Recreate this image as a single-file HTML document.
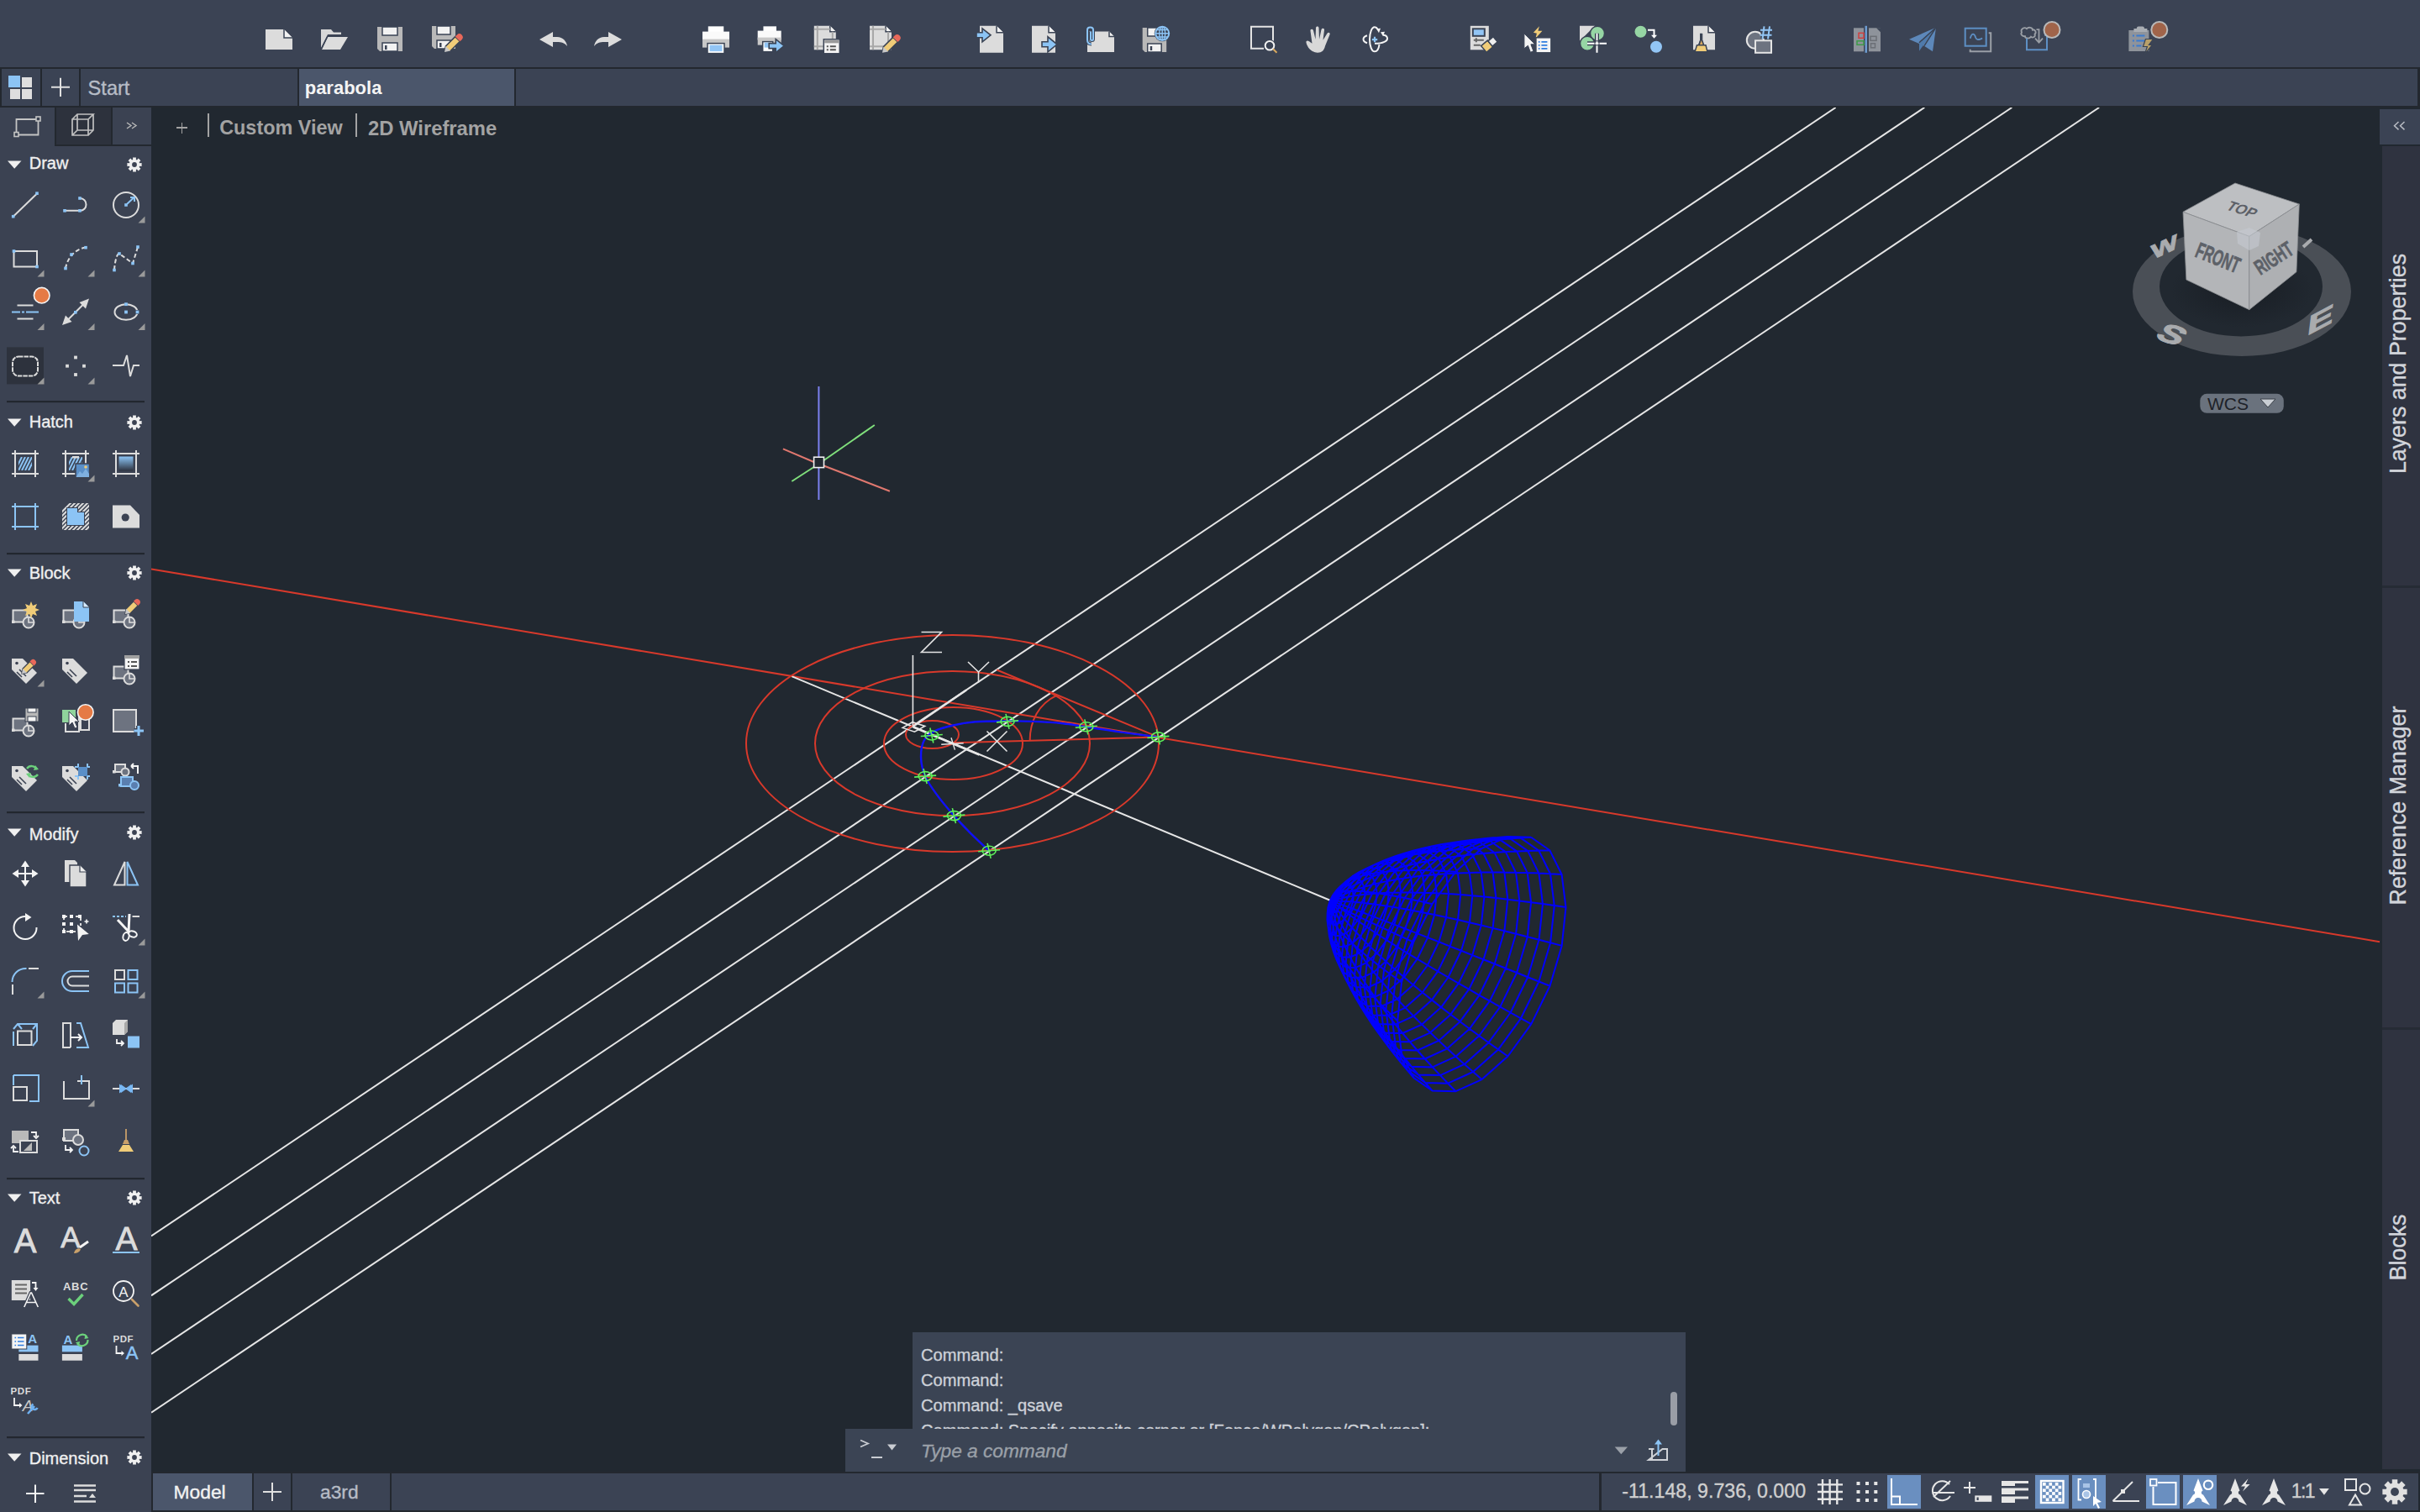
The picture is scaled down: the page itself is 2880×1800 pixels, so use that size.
<!DOCTYPE html>
<html><head><meta charset="utf-8"><style>
html,body{margin:0;padding:0;}
body{width:2880px;height:1800px;overflow:hidden;position:relative;background:#212830;font-family:"Liberation Sans", sans-serif;}
div{-webkit-text-stroke:0.35px currentColor;}
</style></head><body>
<svg style="position:absolute;left:0;top:0" width="2880" height="1800">
<defs><clipPath id="vp"><rect x="180" y="128" width="2655" height="1624"/></clipPath></defs>
<g clip-path="url(#vp)" fill="none" stroke-linecap="butt">
<line x1="180" y1="1471.5" x2="2184.6" y2="128" stroke="#e6e6e6" stroke-width="2"/>
<line x1="180" y1="1542.3" x2="2290.3" y2="128" stroke="#e6e6e6" stroke-width="2"/>
<line x1="180" y1="1612.0" x2="2394.3" y2="128" stroke="#e6e6e6" stroke-width="2"/>
<line x1="180" y1="1681.6" x2="2498.1" y2="128" stroke="#e6e6e6" stroke-width="2"/>
<line x1="180" y1="677.4" x2="2832" y2="1121.2" stroke="#d8392b" stroke-width="2"/>
<line x1="942.2" y1="805.2" x2="1584.6" y2="1072.5" stroke="#e6e6e6" stroke-width="2"/>
<ellipse cx="1133.5" cy="885" rx="245.5" ry="129" stroke="#d8392b" stroke-width="2"/>
<ellipse cx="1133.5" cy="885" rx="163.5" ry="86" stroke="#d8392b" stroke-width="2"/>
<ellipse cx="1134.5" cy="885" rx="82.5" ry="43.1" stroke="#d8392b" stroke-width="2"/>
<ellipse cx="1109.5" cy="874.5" rx="31.5" ry="16.5" stroke="#d8392b" stroke-width="2"/>
<path d="M1134,884.3 L1378.4,877.4 M1186.3,797.5 L1378.4,877.4 M1225.6,882 C1225.6,858 1236,838 1258,827.6" stroke="#d8392b" stroke-width="2"/>
<line x1="974.4" y1="460" x2="974.4" y2="544" stroke="#7b80ee" stroke-width="2"/>
<line x1="974.4" y1="557" x2="974.4" y2="595" stroke="#7b80ee" stroke-width="2"/>
<line x1="942.3" y1="573" x2="968.6" y2="556" stroke="#80e07c" stroke-width="2"/>
<line x1="980.5" y1="548" x2="1040.8" y2="506" stroke="#80e07c" stroke-width="2"/>
<line x1="931.9" y1="534.3" x2="968.6" y2="550" stroke="#e0786f" stroke-width="2"/>
<line x1="980.5" y1="554.5" x2="1058.9" y2="584.7" stroke="#e0786f" stroke-width="2"/>
<rect x="968.6" y="544.2" width="11.9" height="12.4" stroke="#f0f0f0" stroke-width="1.6"/>
<line x1="1086.4" y1="780" x2="1086.4" y2="864.5" stroke="#e6e6e6" stroke-width="1.6"/>
<line x1="1087" y1="864.5" x2="1150" y2="821.5" stroke="#e6e6e6" stroke-width="2.6"/>
<line x1="1087" y1="865.5" x2="1165.5" y2="898.5" stroke="#e6e6e6" stroke-width="2.6"/>
<path d="M1074.1,866.4 L1086,859.7 L1100.7,864.4 L1088.4,871.2 Z" stroke="#e6e6e6" stroke-width="1.6"/>
<path d="M1096.5,752.5 L1120.5,752.5 L1096.5,776.5 L1121,776.5" stroke="#e6e6e6" stroke-width="1.6"/>
<path d="M1152,788 L1164.5,800 L1177,788 M1164.5,800 L1164.5,812.6" stroke="#e6e6e6" stroke-width="1.6"/>
<path d="M1174.5,870.5 L1198.5,894.5 M1198.5,870.5 L1174.5,894.5" stroke="#e6e6e6" stroke-width="1.6"/>
<path d="M1120.2,886.3 L1146.7,884.8 M1132,878.3 L1136.4,892.6" stroke="#e6e6e6" stroke-width="1.4"/>
<path d="M1177.1,1012.8 C1173.6,1009.5 1163.2,1000.0 1156.2,993.1 C1149.3,986.1 1142.3,979.0 1135.4,971.1 C1128.5,963.2 1120.3,953.5 1114.6,945.6 C1108.9,937.8 1104.2,931.3 1101.1,924.1 C1098.1,917.0 1096.3,909.8 1096.1,902.8 C1095.8,895.8 1096.8,887.4 1099.5,882.0 C1102.2,876.6 1106.5,873.5 1112.3,870.4 C1118.0,867.3 1126.1,865.3 1134.2,863.5 C1142.3,861.6 1150.1,860.2 1160.9,859.3 C1171.7,858.5 1187.5,858.5 1199.0,858.4 C1210.6,858.3 1219.3,858.4 1230.3,858.9 C1241.3,859.3 1254.6,860.1 1265.0,861.2 C1275.4,862.3 1281.2,863.6 1292.8,865.3 C1304.3,867.1 1320.2,869.6 1334.4,871.6 C1348.7,873.6 1371.1,876.4 1378.4,877.4" stroke="#c040e0" stroke-width="1" opacity="0.8"/>
<path d="M1177.1,1012.8 C1173.6,1009.5 1163.2,1000.0 1156.2,993.1 C1149.3,986.1 1142.3,979.0 1135.4,971.1 C1128.5,963.2 1120.3,953.5 1114.6,945.6 C1108.9,937.8 1104.2,931.3 1101.1,924.1 C1098.1,917.0 1096.3,909.8 1096.1,902.8 C1095.8,895.8 1096.8,887.4 1099.5,882.0 C1102.2,876.6 1106.5,873.5 1112.3,870.4 C1118.0,867.3 1126.1,865.3 1134.2,863.5 C1142.3,861.6 1150.1,860.2 1160.9,859.3 C1171.7,858.5 1187.5,858.5 1199.0,858.4 C1210.6,858.3 1219.3,858.4 1230.3,858.9 C1241.3,859.3 1254.6,860.1 1265.0,861.2 C1275.4,862.3 1281.2,863.6 1292.8,865.3 C1304.3,867.1 1320.2,869.6 1334.4,871.6 C1348.7,873.6 1371.1,876.4 1378.4,877.4" stroke="#1010ff" stroke-width="2.4"/>
<ellipse cx="1108.8" cy="875.5" rx="8" ry="5.5" stroke="#5ef05a" stroke-width="1.6"/>
<path d="M1095.8,876.5 L1121.8,874.5 M1106.8,866.5 L1110.8,884.5" stroke="#5ef05a" stroke-width="1.6"/>
<ellipse cx="1199.0" cy="858.9" rx="8" ry="5.5" stroke="#5ef05a" stroke-width="1.6"/>
<path d="M1186.0,859.9 L1212.0,857.9 M1197.0,849.9 L1201.0,867.9" stroke="#5ef05a" stroke-width="1.6"/>
<ellipse cx="1292.8" cy="865.3" rx="8" ry="5.5" stroke="#5ef05a" stroke-width="1.6"/>
<path d="M1279.8,866.3 L1305.8,864.3 M1290.8,856.3 L1294.8,874.3" stroke="#5ef05a" stroke-width="1.6"/>
<ellipse cx="1378.4" cy="877.4" rx="8" ry="5.5" stroke="#5ef05a" stroke-width="1.6"/>
<path d="M1365.4,878.4 L1391.4,876.4 M1376.4,868.4 L1380.4,886.4" stroke="#5ef05a" stroke-width="1.6"/>
<ellipse cx="1101.1" cy="924.1" rx="8" ry="5.5" stroke="#5ef05a" stroke-width="1.6"/>
<path d="M1088.1,925.1 L1114.1,923.1 M1099.1,915.1 L1103.1,933.1" stroke="#5ef05a" stroke-width="1.6"/>
<ellipse cx="1135.4" cy="971.1" rx="8" ry="5.5" stroke="#5ef05a" stroke-width="1.6"/>
<path d="M1122.4,972.1 L1148.4,970.1 M1133.4,962.1 L1137.4,980.1" stroke="#5ef05a" stroke-width="1.6"/>
<ellipse cx="1177.1" cy="1012.8" rx="8" ry="5.5" stroke="#5ef05a" stroke-width="1.6"/>
<path d="M1164.1,1013.8 L1190.1,1011.8 M1175.1,1003.8 L1179.1,1021.8" stroke="#5ef05a" stroke-width="1.6"/>
<path d="M1584.6,1072.5 L1594.0,1062.4 L1604.3,1053.6 L1615.2,1045.9 L1626.6,1039.3 L1638.3,1033.4 L1650.1,1028.3 L1662.2,1023.8 L1674.3,1019.8 L1686.5,1016.3 L1698.7,1013.2 L1711.0,1010.4 L1723.3,1008.0 L1735.7,1005.9 L1748.0,1004.0 L1760.4,1002.3 L1772.7,1000.8 L1785.1,999.6 L1797.4,998.5 L1809.8,997.6 L1822.1,996.8 M1584.6,1072.5 L1595.8,1063.6 L1607.7,1056.0 L1620.2,1049.4 L1633.0,1043.7 L1646.1,1038.8 L1659.2,1034.6 L1672.4,1031.0 L1685.7,1027.8 L1699.0,1025.0 L1712.3,1022.6 L1725.6,1020.6 L1738.9,1018.8 L1752.1,1017.3 L1765.4,1016.0 L1778.6,1015.0 L1791.8,1014.1 L1805.0,1013.4 L1818.1,1012.9 L1831.2,1012.5 L1844.3,1012.2 M1584.6,1072.5 L1596.9,1065.9 L1609.9,1060.4 L1623.4,1055.9 L1637.2,1052.1 L1651.1,1048.9 L1665.0,1046.4 L1679.0,1044.3 L1693.1,1042.6 L1707.0,1041.2 L1721.0,1040.2 L1734.9,1039.4 L1748.8,1038.9 L1762.7,1038.6 L1776.5,1038.5 L1790.3,1038.5 L1804.0,1038.8 L1817.7,1039.1 L1831.4,1039.6 L1845.0,1040.2 L1858.6,1041.0 M1584.6,1072.5 L1597.3,1069.1 L1610.7,1066.5 L1624.5,1064.7 L1638.6,1063.4 L1652.8,1062.7 L1667.1,1062.4 L1681.3,1062.4 L1695.6,1062.7 L1709.8,1063.3 L1724.0,1064.1 L1738.2,1065.1 L1752.3,1066.3 L1766.4,1067.6 L1780.4,1069.1 L1794.3,1070.7 L1808.3,1072.4 L1822.1,1074.2 L1836.0,1076.1 L1849.8,1078.1 L1863.5,1080.1 M1584.6,1072.5 L1596.9,1072.7 L1610.0,1073.6 L1623.4,1074.9 L1637.2,1076.7 L1651.1,1078.7 L1665.1,1081.1 L1679.1,1083.6 L1693.1,1086.3 L1707.1,1089.1 L1721.1,1092.1 L1735.0,1095.1 L1748.9,1098.3 L1762.8,1101.5 L1776.6,1104.9 L1790.4,1108.2 L1804.1,1111.7 L1817.8,1115.2 L1831.5,1118.7 L1845.1,1122.3 L1858.7,1125.9 M1584.6,1072.5 L1595.8,1076.6 L1607.8,1081.0 L1620.3,1085.7 L1633.1,1090.6 L1646.1,1095.6 L1659.3,1100.6 L1672.5,1105.8 L1685.8,1110.9 L1699.1,1116.1 L1712.4,1121.3 L1725.7,1126.6 L1739.0,1131.8 L1752.2,1137.1 L1765.5,1142.3 L1778.7,1147.5 L1791.9,1152.8 L1805.1,1158.0 L1818.2,1163.3 L1831.4,1168.5 L1844.5,1173.8 M1584.6,1072.5 L1594.0,1080.2 L1604.3,1088.0 L1615.3,1095.9 L1626.7,1103.7 L1638.3,1111.5 L1650.2,1119.2 L1662.3,1126.8 L1674.4,1134.3 L1686.6,1141.7 L1698.9,1149.0 L1711.2,1156.3 L1723.5,1163.5 L1735.8,1170.7 L1748.2,1177.7 L1760.5,1184.8 L1772.9,1191.7 L1785.3,1198.6 L1797.6,1205.5 L1810.0,1212.3 L1822.3,1219.1 M1584.6,1072.5 L1591.8,1083.3 L1600.0,1094.0 L1609.0,1104.5 L1618.6,1114.8 L1628.5,1124.9 L1638.8,1134.8 L1649.3,1144.5 L1660.0,1154.0 L1670.9,1163.3 L1681.8,1172.5 L1692.8,1181.5 L1704.0,1190.4 L1715.1,1199.1 L1726.4,1207.7 L1737.6,1216.2 L1748.9,1224.7 L1760.3,1233.0 L1771.6,1241.2 L1783.0,1249.4 L1794.4,1257.5 M1584.6,1072.5 L1589.3,1085.5 L1595.2,1098.2 L1602.1,1110.7 L1609.6,1122.8 L1617.7,1134.6 L1626.2,1146.1 L1635.0,1157.3 L1644.1,1168.2 L1653.4,1178.9 L1662.9,1189.3 L1672.5,1199.6 L1682.3,1209.7 L1692.2,1219.6 L1702.2,1229.3 L1712.2,1238.9 L1722.3,1248.3 L1732.5,1257.7 L1742.8,1266.9 L1753.1,1276.0 L1763.5,1285.1 M1584.6,1072.5 L1586.8,1086.6 L1590.4,1100.4 L1595.1,1113.9 L1600.6,1126.9 L1606.8,1139.6 L1613.5,1151.9 L1620.7,1163.8 L1628.1,1175.5 L1635.9,1186.9 L1644.0,1198.0 L1652.2,1208.9 L1660.6,1219.6 L1669.2,1230.0 L1678.0,1240.3 L1686.8,1250.5 L1695.8,1260.5 L1704.8,1270.4 L1714.0,1280.1 L1723.2,1289.7 L1732.5,1299.2 M1584.6,1072.5 L1584.6,1086.5 L1586.1,1100.3 L1588.8,1113.7 L1592.5,1126.7 L1597.0,1139.4 L1602.1,1151.6 L1607.7,1163.5 L1613.8,1175.1 L1620.2,1186.5 L1626.9,1197.6 L1633.9,1208.4 L1641.1,1219.1 L1648.5,1229.5 L1656.1,1239.8 L1663.9,1249.9 L1671.8,1259.9 L1679.8,1269.7 L1687.9,1279.4 L1696.2,1289.0 L1704.6,1298.5 M1584.6,1072.5 L1582.8,1085.3 L1582.7,1097.9 L1583.8,1110.2 L1586.1,1122.3 L1589.2,1133.9 L1593.0,1145.3 L1597.4,1156.4 L1602.3,1167.2 L1607.7,1177.8 L1613.3,1188.1 L1619.3,1198.3 L1625.6,1208.3 L1632.1,1218.1 L1638.8,1227.7 L1645.7,1237.2 L1652.7,1246.6 L1659.9,1255.9 L1667.3,1265.1 L1674.8,1274.1 L1682.4,1283.1 M1584.6,1072.5 L1581.7,1083.0 L1580.5,1093.5 L1580.6,1103.8 L1581.9,1113.9 L1584.2,1123.8 L1587.2,1133.6 L1590.8,1143.1 L1595.0,1152.4 L1599.6,1161.6 L1604.6,1170.6 L1610.0,1179.4 L1615.6,1188.2 L1621.5,1196.8 L1627.6,1205.3 L1633.9,1213.7 L1640.5,1222.0 L1647.2,1230.2 L1654.0,1238.3 L1661.0,1246.4 L1668.1,1254.3 M1584.6,1072.5 L1581.3,1079.9 L1579.7,1087.4 L1579.5,1095.0 L1580.5,1102.6 L1582.5,1110.1 L1585.2,1117.6 L1588.5,1124.9 L1592.5,1132.3 L1596.8,1139.5 L1601.6,1146.7 L1606.7,1153.8 L1612.1,1160.8 L1617.8,1167.8 L1623.7,1174.7 L1629.9,1181.5 L1636.2,1188.4 L1642.7,1195.1 L1649.4,1201.9 L1656.2,1208.5 L1663.2,1215.2 M1584.6,1072.5 L1581.7,1076.2 L1580.4,1080.3 L1580.6,1084.7 L1581.9,1089.3 L1584.2,1094.0 L1587.2,1098.9 L1590.8,1103.7 L1595.0,1108.7 L1599.6,1113.7 L1604.6,1118.7 L1609.9,1123.7 L1615.5,1128.8 L1621.4,1133.8 L1627.6,1138.9 L1633.9,1144.0 L1640.4,1149.1 L1647.1,1154.2 L1653.9,1159.2 L1660.9,1164.3 L1668.0,1169.4 M1584.6,1072.5 L1582.8,1072.4 L1582.6,1072.9 L1583.8,1074.0 L1586.0,1075.4 L1589.1,1077.2 L1593.0,1079.3 L1597.4,1081.6 L1602.3,1084.0 L1607.6,1086.7 L1613.2,1089.4 L1619.2,1092.3 L1625.5,1095.3 L1632.0,1098.3 L1638.7,1101.5 L1645.5,1104.7 L1652.6,1107.9 L1659.8,1111.3 L1667.2,1114.6 L1674.6,1118.1 L1682.2,1121.5 M1584.6,1072.5 L1584.6,1068.8 L1586.1,1065.9 L1588.8,1063.8 L1592.5,1062.3 L1596.9,1061.3 L1602.0,1060.8 L1607.6,1060.6 L1613.7,1060.7 L1620.1,1061.1 L1626.8,1061.7 L1633.7,1062.5 L1641.0,1063.6 L1648.4,1064.7 L1656.0,1066.0 L1663.7,1067.5 L1671.6,1069.0 L1679.6,1070.7 L1687.8,1072.4 L1696.0,1074.3 L1704.4,1076.2 M1584.6,1072.5 L1586.8,1065.7 L1590.4,1060.0 L1595.0,1055.2 L1600.6,1051.2 L1606.7,1047.8 L1613.4,1045.1 L1620.5,1042.8 L1628.0,1041.0 L1635.8,1039.5 L1643.8,1038.3 L1652.1,1037.4 L1660.5,1036.7 L1669.1,1036.3 L1677.8,1036.0 L1686.6,1036.0 L1695.6,1036.1 L1704.6,1036.3 L1713.8,1036.7 L1723.0,1037.2 L1732.3,1037.8 M1584.6,1072.5 L1589.3,1063.5 L1595.2,1055.7 L1602.0,1049.0 L1609.5,1043.2 L1617.6,1038.1 L1626.1,1033.8 L1634.9,1030.0 L1644.0,1026.8 L1653.3,1023.9 L1662.7,1021.4 L1672.4,1019.3 L1682.1,1017.4 L1692.0,1015.8 L1702.0,1014.5 L1712.0,1013.3 L1722.1,1012.4 L1732.3,1011.6 L1742.6,1011.0 L1752.9,1010.6 L1763.2,1010.2 M1584.6,1072.5 L1591.8,1062.4 L1600.0,1053.5 L1609.0,1045.8 L1618.5,1039.1 L1628.5,1033.2 L1638.7,1028.0 L1649.2,1023.5 L1659.9,1019.5 L1670.7,1015.9 L1681.7,1012.8 L1692.7,1010.0 L1703.8,1007.5 L1715.0,1005.3 L1726.2,1003.4 L1737.4,1001.7 L1748.7,1000.2 L1760.1,999.0 L1771.4,997.8 L1782.8,996.9 L1794.2,996.1 M1594.0,1062.4 L1595.8,1063.6 L1596.9,1065.9 L1597.3,1069.1 L1596.9,1072.7 L1595.8,1076.6 L1594.0,1080.2 L1591.8,1083.3 L1589.3,1085.5 L1586.8,1086.6 L1584.6,1086.5 L1582.8,1085.3 L1581.7,1083.0 L1581.3,1079.9 L1581.7,1076.2 L1582.8,1072.4 L1584.6,1068.8 L1586.8,1065.7 L1589.3,1063.5 L1591.8,1062.4 L1594.0,1062.4 M1604.3,1053.6 L1607.7,1056.0 L1609.9,1060.4 L1610.7,1066.5 L1610.0,1073.6 L1607.8,1081.0 L1604.3,1088.0 L1600.0,1094.0 L1595.2,1098.2 L1590.4,1100.4 L1586.1,1100.3 L1582.7,1097.9 L1580.5,1093.5 L1579.7,1087.4 L1580.4,1080.3 L1582.6,1072.9 L1586.1,1065.9 L1590.4,1060.0 L1595.2,1055.7 L1600.0,1053.5 L1604.3,1053.6 M1615.2,1045.9 L1620.2,1049.4 L1623.4,1055.9 L1624.5,1064.7 L1623.4,1074.9 L1620.3,1085.7 L1615.3,1095.9 L1609.0,1104.5 L1602.1,1110.7 L1595.1,1113.9 L1588.8,1113.7 L1583.8,1110.2 L1580.6,1103.8 L1579.5,1095.0 L1580.6,1084.7 L1583.8,1074.0 L1588.8,1063.8 L1595.0,1055.2 L1602.0,1049.0 L1609.0,1045.8 L1615.2,1045.9 M1626.6,1039.3 L1633.0,1043.7 L1637.2,1052.1 L1638.6,1063.4 L1637.2,1076.7 L1633.1,1090.6 L1626.7,1103.7 L1618.6,1114.8 L1609.6,1122.8 L1600.6,1126.9 L1592.5,1126.7 L1586.1,1122.3 L1581.9,1113.9 L1580.5,1102.6 L1581.9,1089.3 L1586.0,1075.4 L1592.5,1062.3 L1600.6,1051.2 L1609.5,1043.2 L1618.5,1039.1 L1626.6,1039.3 M1638.3,1033.4 L1646.1,1038.8 L1651.1,1048.9 L1652.8,1062.7 L1651.1,1078.7 L1646.1,1095.6 L1638.3,1111.5 L1628.5,1124.9 L1617.7,1134.6 L1606.8,1139.6 L1597.0,1139.4 L1589.2,1133.9 L1584.2,1123.8 L1582.5,1110.1 L1584.2,1094.0 L1589.1,1077.2 L1596.9,1061.3 L1606.7,1047.8 L1617.6,1038.1 L1628.5,1033.2 L1638.3,1033.4 M1650.1,1028.3 L1659.2,1034.6 L1665.0,1046.4 L1667.1,1062.4 L1665.1,1081.1 L1659.3,1100.6 L1650.2,1119.2 L1638.8,1134.8 L1626.2,1146.1 L1613.5,1151.9 L1602.1,1151.6 L1593.0,1145.3 L1587.2,1133.6 L1585.2,1117.6 L1587.2,1098.9 L1593.0,1079.3 L1602.0,1060.8 L1613.4,1045.1 L1626.1,1033.8 L1638.7,1028.0 L1650.1,1028.3 M1662.2,1023.8 L1672.4,1031.0 L1679.0,1044.3 L1681.3,1062.4 L1679.1,1083.6 L1672.5,1105.8 L1662.3,1126.8 L1649.3,1144.5 L1635.0,1157.3 L1620.7,1163.8 L1607.7,1163.5 L1597.4,1156.4 L1590.8,1143.1 L1588.5,1124.9 L1590.8,1103.7 L1597.4,1081.6 L1607.6,1060.6 L1620.5,1042.8 L1634.9,1030.0 L1649.2,1023.5 L1662.2,1023.8 M1674.3,1019.8 L1685.7,1027.8 L1693.1,1042.6 L1695.6,1062.7 L1693.1,1086.3 L1685.8,1110.9 L1674.4,1134.3 L1660.0,1154.0 L1644.1,1168.2 L1628.1,1175.5 L1613.8,1175.1 L1602.3,1167.2 L1595.0,1152.4 L1592.5,1132.3 L1595.0,1108.7 L1602.3,1084.0 L1613.7,1060.7 L1628.0,1041.0 L1644.0,1026.8 L1659.9,1019.5 L1674.3,1019.8 M1686.5,1016.3 L1699.0,1025.0 L1707.0,1041.2 L1709.8,1063.3 L1707.1,1089.1 L1699.1,1116.1 L1686.6,1141.7 L1670.9,1163.3 L1653.4,1178.9 L1635.9,1186.9 L1620.2,1186.5 L1607.7,1177.8 L1599.6,1161.6 L1596.8,1139.5 L1599.6,1113.7 L1607.6,1086.7 L1620.1,1061.1 L1635.8,1039.5 L1653.3,1023.9 L1670.7,1015.9 L1686.5,1016.3 M1698.7,1013.2 L1712.3,1022.6 L1721.0,1040.2 L1724.0,1064.1 L1721.1,1092.1 L1712.4,1121.3 L1698.9,1149.0 L1681.8,1172.5 L1662.9,1189.3 L1644.0,1198.0 L1626.9,1197.6 L1613.3,1188.1 L1604.6,1170.6 L1601.6,1146.7 L1604.6,1118.7 L1613.2,1089.4 L1626.8,1061.7 L1643.8,1038.3 L1662.7,1021.4 L1681.7,1012.8 L1698.7,1013.2 M1711.0,1010.4 L1725.6,1020.6 L1734.9,1039.4 L1738.2,1065.1 L1735.0,1095.1 L1725.7,1126.6 L1711.2,1156.3 L1692.8,1181.5 L1672.5,1199.6 L1652.2,1208.9 L1633.9,1208.4 L1619.3,1198.3 L1610.0,1179.4 L1606.7,1153.8 L1609.9,1123.7 L1619.2,1092.3 L1633.7,1062.5 L1652.1,1037.4 L1672.4,1019.3 L1692.7,1010.0 L1711.0,1010.4 M1723.3,1008.0 L1738.9,1018.8 L1748.8,1038.9 L1752.3,1066.3 L1748.9,1098.3 L1739.0,1131.8 L1723.5,1163.5 L1704.0,1190.4 L1682.3,1209.7 L1660.6,1219.6 L1641.1,1219.1 L1625.6,1208.3 L1615.6,1188.2 L1612.1,1160.8 L1615.5,1128.8 L1625.5,1095.3 L1641.0,1063.6 L1660.5,1036.7 L1682.1,1017.4 L1703.8,1007.5 L1723.3,1008.0 M1735.7,1005.9 L1752.1,1017.3 L1762.7,1038.6 L1766.4,1067.6 L1762.8,1101.5 L1752.2,1137.1 L1735.8,1170.7 L1715.1,1199.1 L1692.2,1219.6 L1669.2,1230.0 L1648.5,1229.5 L1632.1,1218.1 L1621.5,1196.8 L1617.8,1167.8 L1621.4,1133.8 L1632.0,1098.3 L1648.4,1064.7 L1669.1,1036.3 L1692.0,1015.8 L1715.0,1005.3 L1735.7,1005.9 M1748.0,1004.0 L1765.4,1016.0 L1776.5,1038.5 L1780.4,1069.1 L1776.6,1104.9 L1765.5,1142.3 L1748.2,1177.7 L1726.4,1207.7 L1702.2,1229.3 L1678.0,1240.3 L1656.1,1239.8 L1638.8,1227.7 L1627.6,1205.3 L1623.7,1174.7 L1627.6,1138.9 L1638.7,1101.5 L1656.0,1066.0 L1677.8,1036.0 L1702.0,1014.5 L1726.2,1003.4 L1748.0,1004.0 M1760.4,1002.3 L1778.6,1015.0 L1790.3,1038.5 L1794.3,1070.7 L1790.4,1108.2 L1778.7,1147.5 L1760.5,1184.8 L1737.6,1216.2 L1712.2,1238.9 L1686.8,1250.5 L1663.9,1249.9 L1645.7,1237.2 L1633.9,1213.7 L1629.9,1181.5 L1633.9,1144.0 L1645.5,1104.7 L1663.7,1067.5 L1686.6,1036.0 L1712.0,1013.3 L1737.4,1001.7 L1760.4,1002.3 M1772.7,1000.8 L1791.8,1014.1 L1804.0,1038.8 L1808.3,1072.4 L1804.1,1111.7 L1791.9,1152.8 L1772.9,1191.7 L1748.9,1224.7 L1722.3,1248.3 L1695.8,1260.5 L1671.8,1259.9 L1652.7,1246.6 L1640.5,1222.0 L1636.2,1188.4 L1640.4,1149.1 L1652.6,1107.9 L1671.6,1069.0 L1695.6,1036.1 L1722.1,1012.4 L1748.7,1000.2 L1772.7,1000.8 M1785.1,999.6 L1805.0,1013.4 L1817.7,1039.1 L1822.1,1074.2 L1817.8,1115.2 L1805.1,1158.0 L1785.3,1198.6 L1760.3,1233.0 L1732.5,1257.7 L1704.8,1270.4 L1679.8,1269.7 L1659.9,1255.9 L1647.2,1230.2 L1642.7,1195.1 L1647.1,1154.2 L1659.8,1111.3 L1679.6,1070.7 L1704.6,1036.3 L1732.3,1011.6 L1760.1,999.0 L1785.1,999.6 M1797.4,998.5 L1818.1,1012.9 L1831.4,1039.6 L1836.0,1076.1 L1831.5,1118.7 L1818.2,1163.3 L1797.6,1205.5 L1771.6,1241.2 L1742.8,1266.9 L1714.0,1280.1 L1687.9,1279.4 L1667.3,1265.1 L1654.0,1238.3 L1649.4,1201.9 L1653.9,1159.2 L1667.2,1114.6 L1687.8,1072.4 L1713.8,1036.7 L1742.6,1011.0 L1771.4,997.8 L1797.4,998.5 M1809.8,997.6 L1831.2,1012.5 L1845.0,1040.2 L1849.8,1078.1 L1845.1,1122.3 L1831.4,1168.5 L1810.0,1212.3 L1783.0,1249.4 L1753.1,1276.0 L1723.2,1289.7 L1696.2,1289.0 L1674.8,1274.1 L1661.0,1246.4 L1656.2,1208.5 L1660.9,1164.3 L1674.6,1118.1 L1696.0,1074.3 L1723.0,1037.2 L1752.9,1010.6 L1782.8,996.9 L1809.8,997.6 M1822.1,996.8 L1844.3,1012.2 L1858.6,1041.0 L1863.5,1080.1 L1858.7,1125.9 L1844.5,1173.8 L1822.3,1219.1 L1794.4,1257.5 L1763.5,1285.1 L1732.5,1299.2 L1704.6,1298.5 L1682.4,1283.1 L1668.1,1254.3 L1663.2,1215.2 L1668.0,1169.4 L1682.2,1121.5 L1704.4,1076.2 L1732.3,1037.8 L1763.2,1010.2 L1794.2,996.1 L1822.1,996.8" stroke="#0000ff" stroke-width="2" stroke-linejoin="round"/>
</g>
<g>
<defs><radialGradient id="vcsh" cx="0.5" cy="0.5" r="0.5"><stop offset="0" stop-color="#15191f" stop-opacity="0.7"/><stop offset="1" stop-color="#15191f" stop-opacity="0"/></radialGradient></defs>
<path fill-rule="evenodd" fill="#4a4f56" d="M2538,347 a130,77 0 1,0 260,0 a130,77 0 1,0 -260,0 Z M2570,341 a97,59.5 0 1,0 194,0 a97,59.5 0 1,0 -194,0 Z"/>
<ellipse cx="2668" cy="345" rx="85" ry="45" fill="url(#vcsh)"/>
<path d="M2660,218 L2736.3,243 L2676.8,281.4 L2598,252.3 Z" fill="#bdbfc2" stroke="#8a8d91" stroke-width="0.8"/>
<path d="M2598,252.3 L2676.8,281.4 L2676.8,368.7 L2601.9,333 Z" fill="#b3b5b8" stroke="#8a8d91" stroke-width="0.8"/>
<path d="M2676.8,281.4 L2736.3,243 L2732.9,323.8 L2676.8,368.7 Z" fill="#aeb0b3" stroke="#8a8d91" stroke-width="0.8"/>
<path d="M2662,276 L2676.8,271 L2690,277 L2688,293 L2676.8,298 L2663,290 Z" fill="#c5c9d0" opacity="0.6"/>
<text font-family="Liberation Sans" font-weight="bold" font-size="17" fill="#5d6168" transform="translate(2648,249) rotate(18) skewX(-20)">TOP</text>
<text font-family="Liberation Sans" font-weight="bold" font-size="22" fill="#5d6168" transform="translate(2611,305) rotate(22) scale(0.72,1.2)" stroke="#5d6168" stroke-width="0.6">FRONT</text>
<text font-family="Liberation Sans" font-weight="bold" font-size="22" fill="#5d6168" transform="translate(2690,328) rotate(-33) scale(0.72,1.15)" stroke="#5d6168" stroke-width="0.6">RIGHT</text>
<text font-family="Liberation Sans" font-weight="bold" font-size="30" fill="#a9abae" stroke="#a9abae" stroke-width="1.2" transform="translate(2562,309) rotate(-25) scale(1.2,0.75) skewX(-10)">W</text>
<text font-family="Liberation Sans" font-weight="bold" font-size="38" fill="#a9abae" stroke="#a9abae" stroke-width="1.2" transform="translate(2563,402) rotate(20) scale(1.2,0.85) skewX(-15)">S</text>
<text font-family="Liberation Sans" font-weight="bold" font-size="36" fill="#a9abae" stroke="#a9abae" stroke-width="1.2" transform="translate(2745,400) rotate(-28) scale(1.45,0.75) skewX(-20)">E</text>
<path d="M2741,294 L2751,285" stroke="#a9abae" stroke-width="4"/>
<rect x="2618.3" y="468.8" width="99.5" height="23" rx="8" fill="#6a727d"/>
<text x="2627" y="488" font-family="Liberation Sans" font-size="21" fill="#1d2128">WCS</text>
<path d="M2690,475 L2708,475 L2699,485 Z" fill="#c9ced4" stroke="#3a4048" stroke-width="1"/>
</g>
</svg>
<div style="position:absolute;left:0px;top:0px;width:2880px;height:80px;background:#3b4354;"></div>
<div style="position:absolute;left:0px;top:80px;width:2880px;height:2px;background:#23282f;"></div>
<div style="position:absolute;left:0px;top:82px;width:2880px;height:44px;background:#3b4354;"></div>
<div style="position:absolute;left:0px;top:82px;width:2px;height:44px;background:#23282f;"></div>
<div style="position:absolute;left:48px;top:82px;width:2px;height:44px;background:#23282f;"></div>
<div style="position:absolute;left:94px;top:82px;width:2px;height:44px;background:#23282f;"></div>
<div style="position:absolute;left:354px;top:82px;width:2px;height:44px;background:#23282f;"></div>
<div style="position:absolute;left:612px;top:82px;width:2px;height:44px;background:#23282f;"></div>
<div style="position:absolute;left:356px;top:82px;width:256px;height:44px;background:#4b566b;"></div>
<div style="position:absolute;left:2877px;top:82px;width:3px;height:44px;background:#23282f;"></div>
<div style="position:absolute;left:0px;top:126px;width:2880px;height:2px;background:#23282f;"></div>
<div style="position:absolute;left:0px;top:128px;width:180px;height:1672px;background:#3b4252;"></div>
<div style="position:absolute;left:67px;top:128px;width:65px;height:44px;background:#2d323d;"></div>
<div style="position:absolute;left:65px;top:128px;width:2px;height:46px;background:#23282f;"></div>
<div style="position:absolute;left:132px;top:128px;width:2px;height:44px;background:#23282f;"></div>
<div style="position:absolute;left:65px;top:172px;width:115px;height:2px;background:#23282f;"></div>
<div style="position:absolute;left:2835px;top:174px;width:45px;height:1575px;background:#2f3340;"></div>
<div style="position:absolute;left:2835px;top:697px;width:45px;height:3px;background:#262b35;"></div>
<div style="position:absolute;left:2835px;top:1223px;width:45px;height:3px;background:#262b35;"></div>
<div style="position:absolute;left:2832px;top:130px;width:48px;height:42px;background:#3b4354;"></div>
<div style="position:absolute;left:180px;top:1752px;width:2700px;height:2px;background:#23282f;"></div>
<div style="position:absolute;left:180px;top:1754px;width:2698px;height:44px;background:#3b4354;"></div>
<div style="position:absolute;left:180px;top:1798px;width:2700px;height:2px;background:#23282f;"></div>
<div style="position:absolute;left:180px;top:1754px;width:2px;height:44px;background:#23282f;"></div>
<div style="position:absolute;left:182px;top:1754px;width:118px;height:44px;background:#4b566b;"></div>
<div style="position:absolute;left:300px;top:1754px;width:2px;height:44px;background:#23282f;"></div>
<div style="position:absolute;left:346px;top:1754px;width:2px;height:44px;background:#23282f;"></div>
<div style="position:absolute;left:464px;top:1754px;width:2px;height:44px;background:#23282f;"></div>
<div style="position:absolute;left:1903px;top:1754px;width:3px;height:44px;background:#23282f;"></div>
<div style="position:absolute;left:1086px;top:1586px;width:920px;height:115px;background:#3b4454;"></div>
<div style="position:absolute;left:1006px;top:1701px;width:1000px;height:51px;background:#3b4454;"></div>
<div style="position:absolute;left:104.6px;top:94.02px;height:28.32px;line-height:23.6px;font-size:23.6px;color:#b7bcc6;font-weight:normal;font-style:normal;white-space:nowrap;">Start</div>
<div style="position:absolute;left:362.7px;top:94.38px;height:26.4px;line-height:22px;font-size:22px;color:#f4f4f4;font-weight:bold;font-style:normal;white-space:nowrap;-webkit-text-stroke:0;">parabola</div>
<div style="position:absolute;left:261.2px;top:141.19px;height:28.08px;line-height:23.4px;font-size:23.4px;color:#a3a3a3;font-weight:bold;font-style:normal;white-space:nowrap;-webkit-text-stroke:0;">Custom View</div>
<div style="position:absolute;left:438px;top:140.85px;height:28.56px;line-height:23.8px;font-size:23.8px;color:#a3a3a3;font-weight:bold;font-style:normal;white-space:nowrap;-webkit-text-stroke:0;">2D Wireframe</div>
<div style="position:absolute;left:247.2px;top:135px;width:2.2px;height:28px;background:#a3a3a3;"></div>
<div style="position:absolute;left:423.2px;top:135px;width:2.2px;height:28px;background:#a3a3a3;"></div>
<div style="position:absolute;left:210px;top:151px;width:13px;height:1.8px;background:#a3a3a3;"></div>
<div style="position:absolute;left:215.6px;top:145.5px;width:1.8px;height:13px;background:#a3a3a3;"></div>
<div style="position:absolute;left:34.7px;top:183.67px;height:24.0px;line-height:20px;font-size:20px;color:#f0f0f0;font-weight:normal;font-style:normal;white-space:nowrap;">Draw</div>
<div style="position:absolute;left:34.7px;top:492.07px;height:24.0px;line-height:20px;font-size:20px;color:#f0f0f0;font-weight:normal;font-style:normal;white-space:nowrap;">Hatch</div>
<div style="position:absolute;left:34.7px;top:672.47px;height:24.0px;line-height:20px;font-size:20px;color:#f0f0f0;font-weight:normal;font-style:normal;white-space:nowrap;">Block</div>
<div style="position:absolute;left:34.7px;top:983.07px;height:24.0px;line-height:20px;font-size:20px;color:#f0f0f0;font-weight:normal;font-style:normal;white-space:nowrap;">Modify</div>
<div style="position:absolute;left:34.7px;top:1416.07px;height:24.0px;line-height:20px;font-size:20px;color:#f0f0f0;font-weight:normal;font-style:normal;white-space:nowrap;">Text</div>
<div style="position:absolute;left:34.7px;top:1726.07px;height:24.0px;line-height:20px;font-size:20px;color:#f0f0f0;font-weight:normal;font-style:normal;white-space:nowrap;">Dimension</div>
<div style="position:absolute;left:1086px;top:1586px;width:920px;height:115px;overflow:hidden"><div style="position:absolute;left:10px;top:17.39px;line-height:20.1px;font-size:20.1px;color:#cdd1d8;white-space:nowrap">Command:</div><div style="position:absolute;left:10px;top:47.29px;line-height:20.1px;font-size:20.1px;color:#cdd1d8;white-space:nowrap">Command:</div><div style="position:absolute;left:10px;top:77.19px;line-height:20.1px;font-size:20.1px;color:#cdd1d8;white-space:nowrap">Command: _qsave</div><div style="position:absolute;left:10px;top:107.09px;line-height:20.1px;font-size:20.1px;color:#cdd1d8;white-space:nowrap">Command: Specify opposite corner or [Fence/WPolygon/CPolygon]:</div></div>
<div style="position:absolute;left:1987.5px;top:1656.7px;width:8px;height:40.3px;background:#9a9ea6;border-radius:4px;"></div>
<div style="position:absolute;left:1096px;top:1716.38px;height:27.24px;line-height:22.7px;font-size:22.7px;color:#9aa0a8;font-weight:normal;font-style:italic;white-space:nowrap;">Type a command</div>
<div style="position:absolute;left:206.6px;top:1765.40px;height:27.36px;line-height:22.8px;font-size:22.8px;color:#f2f2f2;font-weight:normal;font-style:normal;white-space:nowrap;">Model</div>
<div style="position:absolute;left:381px;top:1765.40px;height:27.36px;line-height:22.8px;font-size:22.8px;color:#b7bcc6;font-weight:normal;font-style:normal;white-space:nowrap;">a3rd</div>
<div style="position:absolute;left:1930.3px;top:1764.16px;height:27.84px;line-height:23.2px;font-size:23.2px;color:#cfcfcf;font-weight:normal;font-style:normal;white-space:nowrap;">-11.148, 9.736, 0.000</div>
<div style="position:absolute;left:2726.8px;top:1764.33px;height:27.599999999999998px;line-height:23px;font-size:23px;color:#cfcfcf;font-weight:normal;font-style:normal;white-space:nowrap;letter-spacing:-1.6px;">1:1</div>
<div style="position:absolute;left:2553.5px;top:418px;width:600px;height:30px;line-height:30px;text-align:center;font-size:26.8px;color:#d2d5db;transform:rotate(-90deg);white-space:nowrap">Layers and Properties</div>
<div style="position:absolute;left:2553.5px;top:943.5px;width:600px;height:30px;line-height:30px;text-align:center;font-size:26.8px;color:#d2d5db;transform:rotate(-90deg);white-space:nowrap">Reference Manager</div>
<div style="position:absolute;left:2553.5px;top:1470px;width:600px;height:30px;line-height:30px;text-align:center;font-size:26.8px;color:#d2d5db;transform:rotate(-90deg);white-space:nowrap">Blocks</div>
<svg style="position:absolute;left:0;top:0" width="2880" height="1800"><g transform="translate(316,35)"><path d="M0,0 H22 L32,10 V24 H0 Z" fill="#dcdcdc"/><path d="M22,0 V10 H32" fill="#f2f2f2" stroke="#3a4354" stroke-width="1.5"/></g>
<g transform="translate(382,35)"><path d="M0,0 H12 L15,3.5 H24 V6 H8 L0,22 Z" fill="#d8d8d8"/><path d="M8,9 H32 L23,24 H1 Z" fill="#dddddd"/><path d="M0,24 L8,8" stroke="#3a4354" stroke-width="1.5"/></g>
<g transform="translate(449,32)"><path d="M0,0 H30 V29 H3 L0,26 Z" fill="#b9b9b9"/><rect x="6" y="0" width="18" height="10" fill="#f2f2f2" stroke="#3a4354" stroke-width="1.5"/><rect x="6" y="19" width="18" height="10" fill="#f2f2f2" stroke="#3a4354" stroke-width="1.5"/><rect x="9" y="22" width="2.5" height="5" fill="#3a4354"/></g>
<g transform="translate(514,31)"><path d="M0,0 H28 V27 H3 L0,24 Z" fill="#b9b9b9"/><rect x="6" y="0" width="16" height="10" fill="#f2f2f2" stroke="#3a4354" stroke-width="1.5"/><rect x="6" y="17" width="16" height="10" fill="#f2f2f2" stroke="#3a4354" stroke-width="1.5"/><rect x="9" y="20" width="2.5" height="5" fill="#3a4354"/><g transform="translate(15,31) rotate(-45)"><path d="M0,0 L6,-4 H22 V4 H6 Z" fill="#f0cc78" stroke="#3a4354" stroke-width="1.5"/><path d="M0,0 L6,-4 V4 Z" fill="#c8c8c8"/><path d="M22,-4 H25 A4,4 0 0 1 25,4 H22 Z" fill="#e8685a"/></g></g>
<g transform="translate(642,38)"><path d="M0,9 L16,0 V6 H21 C28,6 32,11 33,17 C30,13 26,12 21,12 H16 V18 Z" fill="#dcdcdc"/></g>
<g transform="translate(707,38)"><path d="M33,9 L17,0 V6 H12 C5,6 1,11 0,17 C3,13 7,12 12,12 H17 V18 Z" fill="#dcdcdc"/></g>
<g transform="translate(836,30.6)"><rect x="6" y="0" width="20" height="11" fill="#fff" stroke="#3a4354" stroke-width="1.5"/><rect x="0" y="7" width="32" height="12" fill="#fafafa"/><rect x="0" y="16" width="32" height="10" fill="#c8c8c8"/><rect x="6" y="21" width="20" height="12" fill="#fff" stroke="#3a4354" stroke-width="1.5"/><rect x="8.5" y="23" width="15" height="7.5" fill="#92c5f5"/></g>
<g transform="translate(901.7,30.6)"><rect x="6" y="0" width="17" height="10" fill="#fff" stroke="#3a4354" stroke-width="1.5"/><rect x="0" y="6" width="28" height="11" fill="#fafafa"/><rect x="0" y="14" width="28" height="9" fill="#c8c8c8"/><rect x="6" y="19" width="12" height="12" fill="#fff" stroke="#3a4354" stroke-width="1.5"/><rect x="8" y="20" width="6" height="6" fill="#92c5f5"/><path d="M13.5,21 H21.5 V16 L31.5,24 L21.5,32 V27 H13.5 Z" fill="#8cc4f5" stroke="#3a4354" stroke-width="1.6"/></g>
<g transform="translate(968.8,30.8)"><path d="M0,0 H19 L26,7 V28.5 H0 Z" fill="#dcdcdc"/><path d="M19,0 V7 H26" fill="#f2f2f2" stroke="#3a4354" stroke-width="1.5"/><path d="M4,0 V28.5 M0,4 H19 M0,24.5 H26 M22,7 V28.5" stroke="#a8a8a8" stroke-width="2"/><rect x="11.5" y="16" width="19" height="17" fill="#f4f4f4" stroke="#3a4354" stroke-width="1.5"/><rect x="12.5" y="17" width="17" height="3.5" fill="#9a9a9a"/><path d="M15,24.5 h2 M19,24.5 h7 M15,28.5 h2 M19,28.5 h7" stroke="#555" stroke-width="2"/></g>
<g transform="translate(1035,30.8)"><path d="M0,0 H19 L26,7 V28.5 H0 Z" fill="#dcdcdc"/><path d="M19,0 V7 H26" fill="#f2f2f2" stroke="#3a4354" stroke-width="1.5"/><path d="M4,0 V28.5 M0,4 H19 M0,24.5 H26 M22,7 V28.5" stroke="#a8a8a8" stroke-width="2"/><g transform="translate(15,32) rotate(-45)"><path d="M0,0 L6,-4 H22 V4 H6 Z" fill="#f0cc78" stroke="#3a4354" stroke-width="1.5"/><path d="M0,0 L6,-4 V4 Z" fill="#c8c8c8"/><path d="M22,-4 H25 A4,4 0 0 1 25,4 H22 Z" fill="#e8685a"/></g></g>
<g transform="translate(1166,30.8)"><path d="M0,0 H20 L28,8 V32 H0 Z" fill="#dcdcdc"/><path d="M20,0 V8 H28" fill="#f2f2f2" stroke="#3a4354" stroke-width="1.5"/><path d="M-4,8 H3 V3 L13,11 L3,19 V14 H-4 Z" fill="#8cc4f5" stroke="#3a4354" stroke-width="1.6"/></g>
<g transform="translate(1228,30.8)"><path d="M0,0 H20 L28,8 V32 H0 Z" fill="#dcdcdc"/><path d="M20,0 V8 H28" fill="#f2f2f2" stroke="#3a4354" stroke-width="1.5"/><path d="M12,19 H19 V13 L30,22 L19,31 V25 H12 Z" fill="#8cc4f5" stroke="#3a4354" stroke-width="1.6"/></g>
<g transform="translate(1294,37.6)"><path d="M0,0 H26 L32,6 V24.4 H0 Z" fill="#dcdcdc"/><path d="M26,0 V6 H32" fill="#f2f2f2" stroke="#3a4354" stroke-width="1.5"/><path d="M5,15 C1,15 0,13 0,10 V-2 C0,-6 7,-6 7,-2 V9 C7,11 4,11 4,9 V0" fill="none" stroke="#3a4354" stroke-width="4"/><path d="M5,15 C1,15 0,13 0,10 V-2 C0,-6 7,-6 7,-2 V9 C7,11 4,11 4,9 V0" fill="none" stroke="#8cc4f5" stroke-width="2"/></g>
<g transform="translate(1359.7,33)"><path d="M0,0 H28.5 V29 H3 L0,26 Z" fill="#b9b9b9"/><rect x="6" y="0" width="16.5" height="10" fill="#f2f2f2" stroke="#3a4354" stroke-width="1.5"/><rect x="6" y="19" width="16.5" height="10" fill="#f2f2f2" stroke="#3a4354" stroke-width="1.5"/><rect x="9" y="22" width="2.5" height="5" fill="#3a4354"/><circle cx="23.5" cy="6.8" r="9.5" fill="#3a4354"/><circle cx="23.5" cy="6.8" r="8" fill="none" stroke="#8cc4f5" stroke-width="2"/><path d="M15.5,6.8 H31.5 M23.5,-1.2 V14.8 M17,2.5 H30 M17,11 H30" stroke="#8cc4f5" stroke-width="1.4"/><ellipse cx="23.5" cy="6.8" rx="3.5" ry="8" fill="none" stroke="#8cc4f5" stroke-width="1.4"/></g>
<g transform="translate(1488,30.8)"><path d="M16,27 H1 V1 H27 V18" fill="none" stroke="#e4e4e4" stroke-width="2"/><circle cx="23" cy="23.5" r="5.3" fill="none" stroke="#3a4354" stroke-width="4"/><circle cx="23" cy="23.5" r="5.3" fill="none" stroke="#f2f2f2" stroke-width="2"/><path d="M27,27.5 L31.5,32" stroke="#d9a95e" stroke-width="2"/></g>
<g transform="translate(1554,30.8)"><path d="M11,31.5 C6,30 2,26 0.5,20 C0,18 2,17 4,18.5 L7.5,21 L5.5,6 C5,3.5 8.5,3 9,5.5 L11.5,16 L12,2.5 C12,0 15.5,0 15.5,2.5 L16,16 L18.5,4.5 C19,2 22.5,2.5 22,5 L20.5,17 L25.5,9 C27,7 29.5,8.5 28.5,10.5 L23,24 C22,29 19,32 14,32 Z" fill="#d8d8d8"/></g>
<g transform="translate(1621,31.8)"><path d="M19,3.5 C17.5,1.2 16,0.5 15,0.5 C11.5,0.5 9,7 9,15 C9,23 11.5,29.5 15,29.5 C18.5,29.5 20,25 20.5,21" fill="none" stroke="#f4f4f4" stroke-width="2"/><path d="M6,10.5 C0,12.5 0,17.5 6,19.5" fill="none" stroke="#f4f4f4" stroke-width="2"/><path d="M15,20 C25,20 30.5,17 30,13.5 C29.5,11 27,10 25,10" fill="none" stroke="#f4f4f4" stroke-width="2"/><path d="M15,12 V18.5 M11.8,15.3 H18.2" stroke="#8cc4f5" stroke-width="2.2"/><path d="M17,2.5 L22,2 L20,7.5 Z M22,6.5 L27,6 L25,11.5 Z" fill="#f4f4f4"/></g>
<g transform="translate(1749.8,30.8)"><rect x="0" y="0" width="22" height="28.5" fill="#dcdcdc"/><rect x="2" y="2.5" width="16" height="10.5" fill="#3a4354"/><rect x="4" y="4.5" width="12" height="6.5" fill="#92c5f5"/><path d="M4,17 H16 M4,23 H12 M7,14.5 V19.5" stroke="#666" stroke-width="2"/><g transform="translate(20,23) rotate(-40)"><rect x="-6" y="-4" width="10" height="10" fill="#f0cc78" stroke="#3a4354" stroke-width="1.5"/><rect x="4" y="-3" width="8" height="8" fill="#eeeeee" stroke="#3a4354" stroke-width="1.5"/></g></g>
<g transform="translate(1813.9,30.8)"><path d="M0,9 L13,22 H8 L11,30 L7.5,31.5 L4.5,23.5 L0,27 Z" fill="#f4f4f4" stroke="#3a4354" stroke-width="1"/><path d="M11,8 L18,0.5 L16.5,6 H21.5 L13.5,15 L15,9 Z" fill="#f0cc78"/><rect x="14" y="14" width="18" height="18" fill="#f4f4f4" stroke="#3a4354" stroke-width="1.5"/><path d="M17,19 h1.6 M20.5,19 h7 M17,23 h1.6 M20.5,23 h7 M17,27 h1.6 M20.5,27 h7" stroke="#2f7de0" stroke-width="1.8"/></g>
<g transform="translate(1880,30.8)"><path d="M0,0 H18 L0,18 Z" fill="#dcdcdc"/><circle cx="21" cy="9" r="8.5" fill="#96d6a4" stroke="#3a4354" stroke-width="1.5"/><circle cx="9" cy="21" r="8.5" fill="#96d6a4" stroke="#3a4354" stroke-width="1.5"/><path d="M20.5,9 V32 M9,21 H32" stroke="#3a4354" stroke-width="5"/><path d="M20.5,9 V32 M9,21 H32" stroke="#fff" stroke-width="2"/><path d="M18,18 h5 v5 h-5 z" fill="none" stroke="#3a4354" stroke-width="1"/></g>
<g transform="translate(1945,30.8)"><circle cx="7.5" cy="7" r="7" fill="#96d6a4"/><circle cx="26" cy="25" r="7" fill="#92c5f5"/><path d="M16,5 H23.5 V12" fill="none" stroke="#fff" stroke-width="2"/><path d="M20,11 H27 L23.5,15 Z" fill="#fff"/></g>
<g transform="translate(2015,30.8)"><path d="M0,0 H18 L26,8 V28.5 H0 Z" fill="#dcdcdc"/><path d="M18,0 V8 H26" fill="#f2f2f2" stroke="#3a4354" stroke-width="1.5"/><path d="M8,9 H11 V17 L15,28 H4 L8,17 Z" fill="#3a4354"/><path d="M9,10 V17 L5.5,27 H14 L10.5,17 V10 Z" fill="#d9a95e" stroke="#3a4354" stroke-width="1.5"/><path d="M4.5,23 H15 L17,31 H2 Z" fill="#f0cc78" stroke="#3a4354" stroke-width="1.5"/></g>
<g transform="translate(2078,30.8)"><circle cx="10.8" cy="17" r="10" fill="#6d7380" stroke="#e4e4e4" stroke-width="2"/><rect x="11" y="17.5" width="19" height="14.5" fill="#6d7380" stroke="#e4e4e4" stroke-width="2"/><path d="M10.8,17 A10,10 0 0 1 20.8,17" fill="none"/><path d="M17.5,6 H32 V15 H17.5 Z" fill="#3a4354"/><path d="M21.5,0.5 L19.5,15.5 M28,0.5 L26,15.5 M17,5 H31 M16.5,11 H30.5" stroke="#92c5f5" stroke-width="2"/></g>
<g transform="translate(2206,30.8)"><rect x="0" y="2.5" width="12" height="28" fill="#8e939b"/><rect x="18" y="2.5" width="14" height="28" fill="#8e939b"/><path d="M27,2.5 L32,7.5 V2.5 Z" fill="#3a4354"/><rect x="13.5" y="0" width="2.5" height="32" fill="#6d9bd0"/><rect x="6" y="8.5" width="6" height="6" fill="none" stroke="#d04040" stroke-width="1.5"/><rect x="4" y="18" width="8" height="4.5" fill="none" stroke="#3e9a48" stroke-width="1.5"/><rect x="20" y="12.5" width="7" height="5" fill="none" stroke="#6b6f76" stroke-width="1.5"/><rect x="20.5" y="21" width="5" height="5" fill="none" stroke="#6b6f76" stroke-width="1.5"/></g>
<g transform="translate(2272,32.7)"><path d="M0,14 L32,0 L28,28.5 L18,22 Z" fill="#5d88ba"/><path d="M12,18 L32,0 L12,28 Z" fill="#4f7aab"/><path d="M12,18 L32,0 L18,22" fill="none" stroke="#3a4354" stroke-width="1.5"/></g>
<g transform="translate(2337.7,32.7)"><rect x="1" y="1" width="25" height="21" fill="none" stroke="#5d8fc4" stroke-width="2"/><path d="M7,13 C9,6 12,7 13.5,12 C15,16 18,14 21.5,13" fill="none" stroke="#5d8fc4" stroke-width="1.8"/><path d="M29,6.5 H31.5 V28.5 H7 V26" fill="none" stroke="#9a9fa6" stroke-width="2"/></g>
<g transform="translate(2404,32.7)"><path d="M2,6 C0,2 5,-1 8,1.5 C10,-1 15,0 15,3 C18,2 20,6 17.5,8 C19,11 15,13 13,11 C11,14 6,13 6,10.5 C3,11 0,8 2,6 Z" fill="none" stroke="#9a9fa6" stroke-width="1.8"/><path d="M8,13 V26.5 H32 V9 H29" fill="none" stroke="#5d8fc4" stroke-width="2"/><path d="M19.5,2.5 H22.5 V17" fill="none" stroke="#9a9fa6" stroke-width="1.8"/><path d="M18,13 L22.5,18 L27,13" fill="none" stroke="#9a9fa6" stroke-width="1.8"/></g>
<circle cx="2442" cy="35.5" r="9.5" fill="#a0644a" stroke="#b9b9b9" stroke-width="2"/>
<g transform="translate(2533.4,31.5)"><rect x="9.5" y="0" width="9" height="4" rx="2" fill="#a9adb3"/><rect x="0" y="4.5" width="24" height="25" fill="#8e939b"/><rect x="6" y="2.5" width="16" height="4" fill="#a9adb3"/><path d="M4.5,11 h2 M9,11 h10 M4.5,17 h2 M9,17 h10 M4.5,23 h2 M9,23 h6" stroke="#3a7bd0" stroke-width="2"/><path d="M20,15 L29,15 L24,22 H28 L19,33 L22,24 H17 Z" fill="#b8a06a" stroke="#3a4354" stroke-width="1.2"/></g>
<circle cx="2569.8" cy="35.5" r="9.5" fill="#a0644a" stroke="#b9b9b9" stroke-width="2"/><g transform="translate(30,244)"><path d="M-14,13.5 L14,-13.5" stroke="#dcdcdc" stroke-width="2"/><rect x="-16.1" y="11.899999999999999" width="3.6" height="3.6" fill="#8cc4f5"/><rect x="12.2" y="-15.600000000000001" width="3.6" height="3.6" fill="#8cc4f5"/></g><g transform="translate(90,244)"><path d="M-13,6.8 H5 M5,-8 C15,-8 15,6.8 5,6.8" stroke="#dcdcdc" stroke-width="2" fill="none"/><rect x="-14.8" y="5.0" width="3.6" height="3.6" fill="#8cc4f5"/><rect x="3.2" y="5.0" width="3.6" height="3.6" fill="#8cc4f5"/><rect x="3.2" y="-9.8" width="3.6" height="3.6" fill="#8cc4f5"/></g><g transform="translate(150,244)"><circle cx="0" cy="0" r="15" stroke="#dcdcdc" stroke-width="2" fill="none"/><rect x="-1.8" y="-1.8" width="3.6" height="3.6" fill="#8cc4f5"/><path d="M1,-1 L9,-8.5 M5,-9 H10 V-4" stroke="#8cc4f5" stroke-width="2" fill="none"/><path d="M22.5,21.5 V13.5 L14.5,21.5 Z" fill="#9a9a9a"/></g><g transform="translate(30,308)"><rect x="-13.5" y="-9" width="27.5" height="18.5" stroke="#dcdcdc" stroke-width="2" fill="none"/><rect x="-15.3" y="-10.8" width="3.6" height="3.6" fill="#8cc4f5"/><rect x="12.2" y="7.7" width="3.6" height="3.6" fill="#8cc4f5"/><path d="M22.5,21.5 V13.5 L14.5,21.5 Z" fill="#9a9a9a"/></g><g transform="translate(90,308)"><path d="M-12,11.5 C-10,0 -2,-11 12,-13.5" stroke="#dcdcdc" stroke-width="2" fill="none" stroke-dasharray="5,3"/><rect x="-13.8" y="9.7" width="3.6" height="3.6" fill="#8cc4f5"/><rect x="-6.8" y="-6.8" width="3.6" height="3.6" fill="#8cc4f5"/><rect x="10.2" y="-15.100000000000001" width="3.6" height="3.6" fill="#8cc4f5"/><path d="M22.5,21.5 V13.5 L14.5,21.5 Z" fill="#9a9a9a"/></g><g transform="translate(150,308)"><path d="M-14,13.5 C-13,0 -10,-7 -8,-6 L8,5.5 L14,-14" stroke="#dcdcdc" stroke-width="2" fill="none" stroke-dasharray="5,3"/><rect x="-15.8" y="11.7" width="3.6" height="3.6" fill="#8cc4f5"/><rect x="-9.8" y="-7.8" width="3.6" height="3.6" fill="#8cc4f5"/><rect x="6.2" y="3.7" width="3.6" height="3.6" fill="#8cc4f5"/><rect x="12.2" y="-15.8" width="3.6" height="3.6" fill="#8cc4f5"/><path d="M22.5,21.5 V13.5 L14.5,21.5 Z" fill="#9a9a9a"/></g><g transform="translate(30,371.5)"><path d="M-9.5,-8 H9.5 M-9.5,8 H9.5" stroke="#dcdcdc" stroke-width="2"/><path d="M-16,0 H-6 M-4,0 H-1 M1,0 H16" stroke="#8cc4f5" stroke-width="2"/><circle cx="19.7" cy="-19.8" r="9.3" fill="#e57a45" stroke="#f4f4f4" stroke-width="1.6"/><path d="M22.5,21.5 V13.5 L14.5,21.5 Z" fill="#9a9a9a"/></g><g transform="translate(90,371.5)"><path d="M-12,12 L12,-12" stroke="#dcdcdc" stroke-width="2"/><path d="M-16,15.5 L-12,4 L-4.5,11.5 Z M16,-16 L12,-4 L4.5,-11.5 Z" fill="#dcdcdc"/><rect x="-2.0" y="-1.5" width="3.6" height="3.6" fill="#8cc4f5"/><path d="M22.5,21.5 V13.5 L14.5,21.5 Z" fill="#9a9a9a"/></g><g transform="translate(150,371.5)"><ellipse cx="0" cy="0" rx="13.5" ry="9.3" stroke="#dcdcdc" stroke-width="2" fill="none"/><rect x="-2" y="-12" width="4" height="5" fill="#3b4252"/><rect x="10" y="-2.5" width="6" height="5" fill="#3b4252"/><rect x="-1.9" y="-11.200000000000001" width="3.8" height="3.8" fill="#8cc4f5"/><rect x="-1.9" y="-1.9" width="3.8" height="3.8" fill="#8cc4f5"/><rect x="11.6" y="-1.9" width="3.8" height="3.8" fill="#8cc4f5"/><path d="M22.5,21.5 V13.5 L14.5,21.5 Z" fill="#9a9a9a"/></g><rect x="8" y="413.4" width="44" height="44" fill="#2d323d"/><g transform="translate(30,436)"><rect x="-15" y="-11.5" width="30" height="23" rx="7" stroke="#dcdcdc" stroke-width="2" fill="none" stroke-dasharray="5.5,1"/><path d="M22.5,21.5 V13.5 L14.5,21.5 Z" fill="#9a9a9a"/></g><g transform="translate(90,436)"><rect x="-1.9" y="-12.4" width="3.8" height="3.8" fill="#dcdcdc"/><rect x="-11.9" y="-2.1999999999999997" width="3.8" height="3.8" fill="#dcdcdc"/><rect x="8.1" y="-2.1999999999999997" width="3.8" height="3.8" fill="#dcdcdc"/><rect x="-1.9" y="8.1" width="3.8" height="3.8" fill="#dcdcdc"/><path d="M22.5,21.5 V13.5 L14.5,21.5 Z" fill="#9a9a9a"/></g><g transform="translate(150,436)"><path d="M-16,-1 H-3 L1,-13 L5,12 L9,-1 H16" stroke="#dcdcdc" stroke-width="2" fill="none"/></g><g transform="translate(30,552)"><path d="M-12,-16 V16 M12,-16 V16 M-16,-12 H16 M-16,12 H16" stroke="#dcdcdc" stroke-width="2"/><clipPath id="hc1"><rect x="-8" y="-8" width="16" height="16"/></clipPath><g clip-path="url(#hc1)"><path d="M-12,8 L-4,-8" stroke="#8cc4f5" stroke-width="2"/><path d="M-8,8 L0,-8" stroke="#8cc4f5" stroke-width="2"/><path d="M-4,8 L4,-8" stroke="#8cc4f5" stroke-width="2"/><path d="M0,8 L8,-8" stroke="#8cc4f5" stroke-width="2"/><path d="M4,8 L12,-8" stroke="#8cc4f5" stroke-width="2"/></g></g><g transform="translate(90,552)"><path d="M-12,-16 V16 M12,-16 V16 M-16,-12 H16 M-16,12 H16" stroke="#dcdcdc" stroke-width="2"/><g clip-path="url(#hc1)"><path d="M-12,8 L-4,-8" stroke="#8cc4f5" stroke-width="2"/><path d="M-8,8 L0,-8" stroke="#8cc4f5" stroke-width="2"/><path d="M-4,8 L4,-8" stroke="#8cc4f5" stroke-width="2"/><path d="M0,8 L8,-8" stroke="#8cc4f5" stroke-width="2"/><path d="M4,8 L12,-8" stroke="#8cc4f5" stroke-width="2"/></g><rect x="-4" y="-9" width="8" height="2.5" fill="#dcdcdc"/><rect x="0" y="0" width="16.5" height="16.5" fill="#5a8fc8" stroke="#3b4252" stroke-width="1.5"/><path d="M0.5,16 L5,9 L8,12 L12,6 L16,12 V16 Z" fill="#7fb0e0"/><circle cx="12" cy="4" r="1.8" fill="#f0cc78"/><path d="M22.5,21.5 V13.5 L14.5,21.5 Z" fill="#9a9a9a"/></g><g transform="translate(150,552)"><path d="M-12,-16 V16 M12,-16 V16 M-16,-12 H16 M-16,12 H16" stroke="#dcdcdc" stroke-width="2"/><defs><linearGradient id="gr1" x1="0" y1="0" x2="0" y2="1"><stop offset="0" stop-color="#8cc4f5"/><stop offset="1" stop-color="#2d3340"/></linearGradient></defs><rect x="-8.5" y="-8.5" width="17" height="17" fill="url(#gr1)"/></g><g transform="translate(30,615)"><path d="M-12,-16 V16 M12,-16 V16 M-16,-12 H16 M-16,12 H16" stroke="#8cc4f5" stroke-width="2"/></g><g transform="translate(90,615)"><clipPath id="hc2"><path d="M-16,-16 H16 V16 H-16 Z M-11,-11 V11 H11 V-6 H3 V-11 Z" clip-rule="evenodd"/></clipPath><rect x="-16" y="-16" width="32" height="32" fill="#3b4252"/><g clip-path="url(#hc2)"><path d="M-40,18 L-4,-18" stroke="#dcdcdc" stroke-width="2"/><path d="M-35,18 L1,-18" stroke="#dcdcdc" stroke-width="2"/><path d="M-30,18 L6,-18" stroke="#dcdcdc" stroke-width="2"/><path d="M-25,18 L11,-18" stroke="#dcdcdc" stroke-width="2"/><path d="M-20,18 L16,-18" stroke="#dcdcdc" stroke-width="2"/><path d="M-15,18 L21,-18" stroke="#dcdcdc" stroke-width="2"/><path d="M-10,18 L26,-18" stroke="#dcdcdc" stroke-width="2"/><path d="M-5,18 L31,-18" stroke="#dcdcdc" stroke-width="2"/><path d="M0,18 L36,-18" stroke="#dcdcdc" stroke-width="2"/><path d="M5,18 L41,-18" stroke="#dcdcdc" stroke-width="2"/><path d="M10,18 L46,-18" stroke="#dcdcdc" stroke-width="2"/><path d="M15,18 L51,-18" stroke="#dcdcdc" stroke-width="2"/><path d="M20,18 L56,-18" stroke="#dcdcdc" stroke-width="2"/></g><path d="M-10,-10 H2 V-5 H10 V10 H-10 Z" fill="#8cc4f5"/></g><g transform="translate(150,615)"><path d="M-16,-13.5 H5 L16,-2 V13.5 H-16 Z" fill="#dcdcdc"/><circle cx="-0.8" cy="1" r="4.6" fill="#3b4252"/></g><g transform="translate(30,732)"><g transform="translate(0,1)"><rect x="-14.5" y="-6.5" width="17" height="14" fill="#6d7380" stroke="#dcdcdc" stroke-width="2"/><rect x="-16" y="5.5" width="3.5" height="3.5" fill="#dcdcdc"/><circle cx="4" cy="8" r="6.5" fill="#6d7380" stroke="#dcdcdc" stroke-width="2"/><path d="M4,1.5 V8 H10.5" stroke="#dcdcdc" stroke-width="1.6" fill="none"/></g><path d="M7,-16 L9,-11 L14,-13 L12,-8 L17,-6 L12,-4 L14,1 L9,-1 L7,4 L5,-1 L0,1 L2,-4 L-3,-6 L2,-8 L0,-13 L5,-11 Z" fill="#f0cc78"/></g><g transform="translate(90,732)"><g transform="translate(0,1)"><rect x="-14.5" y="-6.5" width="17" height="14" fill="#6d7380" stroke="#dcdcdc" stroke-width="2"/><rect x="-16" y="5.5" width="3.5" height="3.5" fill="#dcdcdc"/><circle cx="4" cy="8" r="6.5" fill="#6d7380" stroke="#dcdcdc" stroke-width="2"/><path d="M4,1.5 V8 H10.5" stroke="#dcdcdc" stroke-width="1.6" fill="none"/></g><path d="M-2,-16 H9 L16,-9 V8 H-2 Z" fill="#8cc4f5"/><path d="M9,-16 V-9 H16" fill="#d8ecff" stroke="#3b4252" stroke-width="1"/></g><g transform="translate(150,732)"><g transform="translate(0,1)"><rect x="-14.5" y="-6.5" width="17" height="14" fill="#6d7380" stroke="#dcdcdc" stroke-width="2"/><rect x="-16" y="5.5" width="3.5" height="3.5" fill="#dcdcdc"/><circle cx="4" cy="8" r="6.5" fill="#6d7380" stroke="#dcdcdc" stroke-width="2"/><path d="M4,1.5 V8 H10.5" stroke="#dcdcdc" stroke-width="1.6" fill="none"/></g><g transform="translate(-1,-1) rotate(-45) scale(1.05)"><path d="M0,0 L5,-3.5 H17 V3.5 H5 Z" fill="#f0cc78" stroke="#3b4252" stroke-width="1.3"/><path d="M0,0 L5,-3.5 V3.5 Z" fill="#c8c8c8"/><path d="M17,-3.5 H19 A3.5,3.5 0 0 1 19,3.5 H17 Z" fill="#e8685a"/></g></g><g transform="translate(30,796)"><g transform="translate(0,-2)"><path d="M-16,-10 H-3 L14,7 L1,20 L-16,3 Z" fill="#dcdcdc"/><circle cx="-10" cy="-4.5" r="1.8" fill="#3b4252"/><path d="M-7,3 L1,11 M-10,6 L-4,12" stroke="#3b4252" stroke-width="1.6"/></g><g transform="translate(-4,6) rotate(-45) scale(1)"><path d="M0,0 L5,-3.5 H17 V3.5 H5 Z" fill="#f0cc78" stroke="#3b4252" stroke-width="1.3"/><path d="M0,0 L5,-3.5 V3.5 Z" fill="#c8c8c8"/><path d="M17,-3.5 H19 A3.5,3.5 0 0 1 19,3.5 H17 Z" fill="#e8685a"/></g><path d="M22.5,21.5 V13.5 L14.5,21.5 Z" fill="#9a9a9a"/></g><g transform="translate(90,796)"><g transform="translate(0,-2)"><path d="M-16,-10 H-3 L14,7 L1,20 L-16,3 Z" fill="#dcdcdc"/><circle cx="-10" cy="-4.5" r="1.8" fill="#3b4252"/><path d="M-7,3 L1,11 M-10,6 L-4,12" stroke="#3b4252" stroke-width="1.6"/></g></g><g transform="translate(150,796)"><g transform="translate(0,4)"><rect x="-14.5" y="-6.5" width="17" height="14" fill="#6d7380" stroke="#dcdcdc" stroke-width="2"/><rect x="-16" y="5.5" width="3.5" height="3.5" fill="#dcdcdc"/><circle cx="4" cy="8" r="6.5" fill="#6d7380" stroke="#dcdcdc" stroke-width="2"/><path d="M4,1.5 V8 H10.5" stroke="#dcdcdc" stroke-width="1.6" fill="none"/></g><rect x="-2" y="-16" width="18" height="17" fill="#f4f4f4" stroke="#3b4252" stroke-width="1.2"/><rect x="-2" y="-16" width="18" height="4" fill="#a0a0a0"/><path d="M2,-8 h2 M6,-8 h7 M2,-3 h2 M6,-3 h7" stroke="#555" stroke-width="1.8"/></g><g transform="translate(30,859)"><g transform="translate(0,3)"><rect x="-14.5" y="-6.5" width="17" height="14" fill="#6d7380" stroke="#dcdcdc" stroke-width="2"/><rect x="-16" y="5.5" width="3.5" height="3.5" fill="#dcdcdc"/><circle cx="4" cy="8" r="6.5" fill="#6d7380" stroke="#dcdcdc" stroke-width="2"/><path d="M4,1.5 V8 H10.5" stroke="#dcdcdc" stroke-width="1.6" fill="none"/></g><rect x="0" y="-16" width="16" height="16" fill="#b9b9b9" stroke="#3b4252" stroke-width="1"/><rect x="3" y="-16" width="10" height="5" fill="#f4f4f4" stroke="#3b4252" stroke-width="1"/><rect x="3" y="-6" width="10" height="6" fill="#f4f4f4" stroke="#3b4252" stroke-width="1"/></g><g transform="translate(90,859)"><rect x="-16" y="-14" width="16" height="15" fill="#90d49c"/><path d="M-12,2 V12 H4 V-6" fill="none" stroke="#dcdcdc" stroke-width="2"/><rect x="6" y="-4" width="10" height="14" fill="none" stroke="#dcdcdc" stroke-width="2"/><path d="M-8,-12 L4,0 H-1 L2,7 L-1,8 L-4,1 L-8,5 Z" fill="#f4f4f4" stroke="#3b4252" stroke-width="1"/><circle cx="11.8" cy="-11" r="9.3" fill="#e57a45" stroke="#f4f4f4" stroke-width="1.6"/></g><g transform="translate(150,859)"><rect x="-15" y="-14" width="27" height="26" fill="#6d7380" stroke="#dcdcdc" stroke-width="2"/><path d="M9.5,11 H21 M15,5 V17" stroke="#3b4252" stroke-width="6"/><path d="M9.5,11 H21 M15,5 V17" stroke="#8cc4f5" stroke-width="3"/></g><g transform="translate(30,924)"><g transform="translate(0,-2)"><path d="M-16,-10 H-3 L14,7 L1,20 L-16,3 Z" fill="#dcdcdc"/><circle cx="-10" cy="-4.5" r="1.8" fill="#3b4252"/><path d="M-7,3 L1,11 M-10,6 L-4,12" stroke="#3b4252" stroke-width="1.6"/></g><path d="M2,-9 A7,7 0 0 1 14,-8 M15,-2 A7,7 0 0 1 3,-3" stroke="#6cd07c" stroke-width="2.4" fill="none"/><path d="M12,-13 L16,-8 L10,-7 Z M5,2 L1,-3 L7,-4 Z" fill="#6cd07c"/></g><g transform="translate(90,924)"><g transform="translate(0,-2)"><path d="M-16,-10 H-3 L14,7 L1,20 L-16,3 Z" fill="#dcdcdc"/><circle cx="-10" cy="-4.5" r="1.8" fill="#3b4252"/><path d="M-7,3 L1,11 M-10,6 L-4,12" stroke="#3b4252" stroke-width="1.6"/></g><rect x="3" y="-11" width="11" height="11" fill="#5a8fc8"/><path d="M-1,-11 H3 M-1,0 H3 M14,-11 h3 M14,0 h3 M3,-15 V-11 M14,-15 v4 M3,0 v4 M14,0 v4" stroke="#8cc4f5" stroke-width="2"/></g><g transform="translate(150,924)"><rect x="-13" y="-14" width="12" height="9" fill="#6d7380" stroke="#dcdcdc" stroke-width="2"/><rect x="-16" y="-7" width="3.5" height="3.5" fill="#dcdcdc"/><circle cx="-1" cy="-5" r="4.5" fill="#6d7380" stroke="#dcdcdc" stroke-width="2"/><path d="M6,-12 H14 V-3 M6,-12 L9,-15 M6,-12 L9,-9" fill="none" stroke="#f4f4f4" stroke-width="2"/><rect x="-6" y="1" width="14" height="11" fill="#5a7fb0" stroke="#8cc4f5" stroke-width="2"/><rect x="-9" y="9" width="3.5" height="3.5" fill="#8cc4f5"/><circle cx="10" cy="11" r="5" fill="#5a7fb0" stroke="#8cc4f5" stroke-width="2"/></g><g transform="translate(30,1040)"><path d="M0,-12 V12 M-12,0 H12" stroke="#f4f4f4" stroke-width="2"/><path d="M0,-15.5 L-5,-8 H5 Z M0,15.5 L-5,8 H5 Z M-15.5,0 L-8,-5 V5 Z M15.5,0 L8,-5 V5 Z" fill="#f4f4f4"/></g><g transform="translate(90,1040)"><path d="M-13,-16 H-1 L2,-13 V10 H-13 Z" fill="#dcdcdc"/><path d="M-7,-10 H5 L13,-2 V16 H-7 Z" fill="#dcdcdc" stroke="#3b4252" stroke-width="1.4"/><path d="M5,-10 V-2 H13" fill="#eeeeee" stroke="#3b4252" stroke-width="1.2"/></g><g transform="translate(150,1040)"><path d="M-1.5,-14 V13.5 H-14 Z" fill="none" stroke="#dcdcdc" stroke-width="2"/><path d="M1.5,-14 V13.5 H14 Z" fill="none" stroke="#8cc4f5" stroke-width="2"/></g><g transform="translate(30,1104)"><path d="M0,-13 A13.5,13.5 0 1 0 13.5,0" fill="none" stroke="#f4f4f4" stroke-width="2"/><path d="M0,-17 L7.5,-12 L0,-7 Z" fill="#f4f4f4"/></g><g transform="translate(90,1104)"><path d="M-14,-13 H6 V-2 M-14,-13 V5 H3" fill="none" stroke="#dcdcdc" stroke-width="2" stroke-dasharray="4,3"/><rect x="-16.0" y="-15.0" width="4" height="4" fill="#f4f4f4"/><rect x="-7.0" y="-15.0" width="4" height="4" fill="#f4f4f4"/><rect x="3.0" y="-15.0" width="4" height="4" fill="#f4f4f4"/><rect x="-16.0" y="-6.0" width="4" height="4" fill="#f4f4f4"/><rect x="-7.0" y="-6.0" width="4" height="4" fill="#f4f4f4"/><rect x="-16.0" y="3.0" width="4" height="4" fill="#f4f4f4"/><rect x="-7.0" y="3.0" width="4" height="4" fill="#f4f4f4"/><path d="M2,-3.5 L15.8,8 L8,9 L3,16 Z" fill="#f4f4f4"/><path d="M10.5,-7 H15.5 M13,-9.5 V-4.5" stroke="#f4f4f4" stroke-width="1.6"/></g><g transform="translate(150,1104)"><path d="M-16,-13 H0" stroke="#8cc4f5" stroke-width="2" stroke-dasharray="3,2"/><path d="M7.5,-13 H16" stroke="#dcdcdc" stroke-width="2"/><path d="M-10,-9 L4,6 M4,-16 L3,6" stroke="#f4f4f4" stroke-width="3"/><ellipse cx="0" cy="11" rx="3.5" ry="5" fill="none" stroke="#f4f4f4" stroke-width="2" transform="rotate(15 0 11)"/><ellipse cx="8" cy="8" rx="5" ry="3.5" fill="none" stroke="#f4f4f4" stroke-width="2" transform="rotate(20 8 8)"/><path d="M22.5,21.5 V13.5 L14.5,21.5 Z" fill="#9a9a9a"/></g><g transform="translate(30,1167)"><path d="M-15.5,2 A16,16 0 0 1 1.5,-14" fill="none" stroke="#8cc4f5" stroke-width="2"/><path d="M4,-14 H16 M-15,5 V17" stroke="#dcdcdc" stroke-width="2"/><path d="M22.5,21.5 V13.5 L14.5,21.5 Z" fill="#9a9a9a"/></g><g transform="translate(90,1167)"><path d="M16,-11 H-4 A12,12 0 0 0 -4,13 H16" fill="none" stroke="#8cc4f5" stroke-width="2"/><path d="M16,-4.5 H-4 A5.5,5.5 0 0 0 -4,6.5 H16" fill="none" stroke="#dcdcdc" stroke-width="2"/></g><g transform="translate(150,1167)"><rect x="-13" y="-12" width="11" height="11" fill="none" stroke="#dcdcdc" stroke-width="2"/><rect x="2.5" y="-12" width="11" height="11" fill="none" stroke="#8cc4f5" stroke-width="2"/><rect x="-13" y="3.5" width="11" height="11" fill="none" stroke="#8cc4f5" stroke-width="2"/><rect x="2.5" y="3.5" width="11" height="11" fill="none" stroke="#8cc4f5" stroke-width="2"/><path d="M22.5,21.5 V13.5 L14.5,21.5 Z" fill="#9a9a9a"/></g><g transform="translate(30,1232)"><path d="M-14,-7 L-9,-13 H14 V7 L9,13" fill="none" stroke="#8cc4f5" stroke-width="2"/><path d="M-9,-13 L-4,-7 M14,-13 L9,-7" stroke="#8cc4f5" stroke-width="2"/><rect x="-9" y="-4.5" width="16.5" height="16.5" fill="none" stroke="#dcdcdc" stroke-width="2"/><path d="M-14,-4 V13" stroke="#8cc4f5" stroke-width="2"/></g><g transform="translate(90,1232)"><path d="M-6,15 H-15 V-14 H-6 V15" fill="none" stroke="#dcdcdc" stroke-width="2"/><path d="M1,-14 H6 L15,15 H1" fill="none" stroke="#8cc4f5" stroke-width="2"/><path d="M-6,3 H7 M3,-1 L7,3 L3,7" fill="none" stroke="#f4f4f4" stroke-width="2"/></g><g transform="translate(150,1232)"><path d="M-16,-14 L-12,-18 H2 V-4 L-2,0 H-16 Z" fill="#dcdcdc"/><path d="M-2,-14 L2,-18 V-4 L-2,0 Z" fill="#a8a8a8"/><rect x="2" y="1.5" width="14" height="14" fill="#8cc4f5"/><path d="M-11,5 V10 H-3 M-6,7 L-3,10 L-6,13" fill="none" stroke="#f4f4f4" stroke-width="1.8"/></g><g transform="translate(30,1296)"><path d="M-14,-16 H16 V15 H5" fill="none" stroke="#8cc4f5" stroke-width="2"/><path d="M-14,-16 V-4" stroke="#8cc4f5" stroke-width="2"/><rect x="-14" y="-2" width="16" height="16" fill="none" stroke="#dcdcdc" stroke-width="2"/></g><g transform="translate(90,1296)"><path d="M-14,-9 V12 H16 V-9 H2" fill="none" stroke="#dcdcdc" stroke-width="2"/><path d="M7,-16 V-5" stroke="#8cc4f5" stroke-width="2"/><path d="M22.5,21.5 V13.5 L14.5,21.5 Z" fill="#9a9a9a"/></g><g transform="translate(150,1296)"><path d="M-16,0 H16" stroke="#dcdcdc" stroke-width="2"/><path d="M-6,-5 L1,0 L-6,5 Z M6,-5 L-1,0 L6,5 Z" fill="#6fb0f0"/><path d="M-8,-5.5 L0,0 L-8,5.5 Z M8,-5.5 L0,0 L8,5.5 Z" fill="#7ab8f2"/></g><g transform="translate(30,1360)"><rect x="-16" y="-14" width="20" height="15" fill="#b9b9b9"/><rect x="-6" y="-2" width="20" height="14" fill="#3b4252" stroke="#dcdcdc" stroke-width="2"/><path d="M-2,10 L8,0 V10 Z" fill="#b9b9b9"/><path d="M7,-12 H13 V-7 M10,-8 L13,-5 L16,-8" fill="none" stroke="#f4f4f4" stroke-width="1.8"/><path d="M-8,11 H-14 V6 M-11,7 L-14,4 L-17,7" fill="none" stroke="#f4f4f4" stroke-width="1.8"/></g><g transform="translate(90,1360)"><rect x="-14" y="-15" width="17" height="13" fill="#6d7380" stroke="#dcdcdc" stroke-width="2"/><rect x="-16" y="-6" width="4" height="4" fill="#dcdcdc"/><circle cx="3" cy="-3" r="6" fill="#6d7380" stroke="#dcdcdc" stroke-width="2"/><path d="M-12,3 V9 H-4 M-7,6 L-4,9 L-7,12" fill="none" stroke="#f4f4f4" stroke-width="1.8"/><circle cx="10" cy="10" r="5.5" fill="none" stroke="#8cc4f5" stroke-width="2"/></g><g transform="translate(150,1360)"><path d="M0,-16 V0" stroke="#c9a06a" stroke-width="1.8"/><path d="M-2,-3 H2 L4,2 H-4 Z" fill="#c9a06a"/><path d="M-4,3 H4 L9,11 H-9 Z" fill="#f0cc78"/></g><text x="30" y="1490.7" text-anchor="middle" font-family="Liberation Sans" font-size="40" fill="#dcdcdc" stroke="#dcdcdc" stroke-width="0.9">A</text><text x="84" y="1484.7" text-anchor="middle" font-family="Liberation Sans" font-size="35" fill="#dcdcdc" stroke="#dcdcdc" stroke-width="0.9">A</text><path d="M88,1492 C89,1487 93,1485 96,1487 C95,1491 91,1492 88,1492 Z" fill="#c9a06a"/><path d="M95,1485 L105,1478" stroke="#f4f4f4" stroke-width="3"/><text x="150.4" y="1488" text-anchor="middle" font-family="Liberation Sans" font-size="39" fill="#dcdcdc" stroke="#dcdcdc" stroke-width="0.9">A</text><path d="M134,1491 H166" stroke="#8cc4f5" stroke-width="2"/><rect x="13.8" y="1524" width="22.3" height="24" fill="#dcdcdc"/><path d="M18,1529.5 H32 M18,1534.5 H32 M18,1539.5 H32" stroke="#666" stroke-width="1.8"/><path d="M38,1527 H42.5 V1535" fill="none" stroke="#f4f4f4" stroke-width="1.8"/><path d="M39.5,1533 H45.5 L42.5,1537 Z" fill="#f4f4f4"/><path d="M28.8,1556 L36.5,1539 H37.5 L45.3,1556 M31.5,1550.5 H42.5" fill="none" stroke="#3b4252" stroke-width="4"/><path d="M28.8,1556 L36.5,1539 H37.5 L45.3,1556 M31.5,1550.5 H42.5" fill="none" stroke="#f4f4f4" stroke-width="1.6"/><text x="90.2" y="1536" text-anchor="middle" font-family="Liberation Sans" font-size="13" fill="#dcdcdc" font-weight="bold" letter-spacing="0.8">ABC</text><path d="M81.5,1546 L88,1552.5 L98.5,1541" fill="none" stroke="#6cd07c" stroke-width="3.4"/><circle cx="147" cy="1537" r="12" fill="none" stroke="#f4f4f4" stroke-width="1.8"/><text x="147" y="1543.5" text-anchor="middle" font-family="Liberation Sans" font-size="17" fill="#f4f4f4" >A</text><path d="M157,1547 L164.5,1554.5" stroke="#c9a06a" stroke-width="2.6" stroke-linecap="round"/><rect x="22.3" y="1612" width="23.2" height="7.7" fill="#dcdcdc"/><rect x="22.3" y="1601.6" width="23.2" height="7.7" fill="#8cc4f5"/><rect x="13.8" y="1588" width="18" height="18" fill="#f4f4f4" stroke="#3b4252" stroke-width="1"/><path d="M17.5,1592.5 h1.6 M21,1592.5 h7.5 M17.5,1597 h1.6 M21,1597 h7.5 M17.5,1601.5 h1.6 M21,1601.5 h7.5" stroke="#2f7de0" stroke-width="1.6"/><text x="38.7" y="1599" text-anchor="middle" font-family="Liberation Sans" font-size="15" fill="#8cc4f5" font-weight="bold">A</text><rect x="73.9" y="1612" width="24" height="7.7" fill="#dcdcdc"/><rect x="73.9" y="1601.6" width="24" height="7.7" fill="#8cc4f5"/><text x="80.8" y="1599.8" text-anchor="middle" font-family="Liberation Sans" font-size="15" fill="#8cc4f5" font-weight="bold">A</text><path d="M91,1596 A7,7 0 0 1 103.5,1591.5 M104.5,1595 A7,7 0 0 1 92,1599.5" fill="none" stroke="#6cd07c" stroke-width="2.2"/><path d="M101.5,1588.5 L105.5,1593 L100.5,1594 Z M94,1602.5 L90,1598 L95,1597 Z" fill="#6cd07c"/><text x="146.8" y="1598" text-anchor="middle" font-family="Liberation Sans" font-size="11.5" fill="#dcdcdc" font-weight="bold" letter-spacing="0.6">PDF</text><path d="M138.5,1602 V1611 H145.5" fill="none" stroke="#f4f4f4" stroke-width="1.8"/><path d="M144.5,1608 L148,1611 L144.5,1614 Z" fill="#f4f4f4"/><text x="157.2" y="1617.8" text-anchor="middle" font-family="Liberation Sans" font-size="22" fill="#8cc4f5" stroke="#8cc4f5" stroke-width="0.5">A</text><text x="24.9" y="1660" text-anchor="middle" font-family="Liberation Sans" font-size="11.5" fill="#dcdcdc" font-weight="bold" letter-spacing="0.6">PDF</text><path d="M17,1664 V1673 H24" fill="none" stroke="#f4f4f4" stroke-width="1.8"/><path d="M23,1670 L26.5,1673 L23,1676 Z" fill="#f4f4f4"/><text x="33" y="1680" text-anchor="middle" font-family="Liberation Sans" font-size="19" fill="#c8c8c8" font-style="italic">A</text><path d="M33,1683 L41,1674 M39.5,1671.5 A3.5,3.5 0 1 0 44.5,1676" fill="none" stroke="#6fb0f0" stroke-width="2.6"/><path d="M168.59,194.08 L168.59,197.92 L166.05,197.87 L165.60,198.96 L167.43,200.71 L164.71,203.43 L162.96,201.60 L161.87,202.05 L161.92,204.59 L158.08,204.59 L158.13,202.05 L157.04,201.60 L155.29,203.43 L152.57,200.71 L154.40,198.96 L153.95,197.87 L151.41,197.92 L151.41,194.08 L153.95,194.13 L154.40,193.04 L152.57,191.29 L155.29,188.57 L157.04,190.40 L158.13,189.95 L158.08,187.41 L161.92,187.41 L161.87,189.95 L162.96,190.40 L164.71,188.57 L167.43,191.29 L165.60,193.04 L166.05,194.13 Z" fill="#f0f0f0"/><circle cx="160" cy="196" r="2.90" fill="#3b4252"/><path d="M9,191.5 H25.5 L17.2,200.8 Z" fill="#f0f0f0"/><path d="M168.59,501.08 L168.59,504.92 L166.05,504.87 L165.60,505.96 L167.43,507.71 L164.71,510.43 L162.96,508.60 L161.87,509.05 L161.92,511.59 L158.08,511.59 L158.13,509.05 L157.04,508.60 L155.29,510.43 L152.57,507.71 L154.40,505.96 L153.95,504.87 L151.41,504.92 L151.41,501.08 L153.95,501.13 L154.40,500.04 L152.57,498.29 L155.29,495.57 L157.04,497.40 L158.13,496.95 L158.08,494.41 L161.92,494.41 L161.87,496.95 L162.96,497.40 L164.71,495.57 L167.43,498.29 L165.60,500.04 L166.05,501.13 Z" fill="#f0f0f0"/><circle cx="160" cy="503" r="2.90" fill="#3b4252"/><path d="M9,498.5 H25.5 L17.2,507.8 Z" fill="#f0f0f0"/><path d="M168.59,680.08 L168.59,683.92 L166.05,683.87 L165.60,684.96 L167.43,686.71 L164.71,689.43 L162.96,687.60 L161.87,688.05 L161.92,690.59 L158.08,690.59 L158.13,688.05 L157.04,687.60 L155.29,689.43 L152.57,686.71 L154.40,684.96 L153.95,683.87 L151.41,683.92 L151.41,680.08 L153.95,680.13 L154.40,679.04 L152.57,677.29 L155.29,674.57 L157.04,676.40 L158.13,675.95 L158.08,673.41 L161.92,673.41 L161.87,675.95 L162.96,676.40 L164.71,674.57 L167.43,677.29 L165.60,679.04 L166.05,680.13 Z" fill="#f0f0f0"/><circle cx="160" cy="682" r="2.90" fill="#3b4252"/><path d="M9,677.5 H25.5 L17.2,686.8 Z" fill="#f0f0f0"/><path d="M168.59,989.08 L168.59,992.92 L166.05,992.87 L165.60,993.96 L167.43,995.71 L164.71,998.43 L162.96,996.60 L161.87,997.05 L161.92,999.59 L158.08,999.59 L158.13,997.05 L157.04,996.60 L155.29,998.43 L152.57,995.71 L154.40,993.96 L153.95,992.87 L151.41,992.92 L151.41,989.08 L153.95,989.13 L154.40,988.04 L152.57,986.29 L155.29,983.57 L157.04,985.40 L158.13,984.95 L158.08,982.41 L161.92,982.41 L161.87,984.95 L162.96,985.40 L164.71,983.57 L167.43,986.29 L165.60,988.04 L166.05,989.13 Z" fill="#f0f0f0"/><circle cx="160" cy="991" r="2.90" fill="#3b4252"/><path d="M9,986.5 H25.5 L17.2,995.8 Z" fill="#f0f0f0"/><path d="M168.59,1424.08 L168.59,1427.92 L166.05,1427.87 L165.60,1428.96 L167.43,1430.71 L164.71,1433.43 L162.96,1431.60 L161.87,1432.05 L161.92,1434.59 L158.08,1434.59 L158.13,1432.05 L157.04,1431.60 L155.29,1433.43 L152.57,1430.71 L154.40,1428.96 L153.95,1427.87 L151.41,1427.92 L151.41,1424.08 L153.95,1424.13 L154.40,1423.04 L152.57,1421.29 L155.29,1418.57 L157.04,1420.40 L158.13,1419.95 L158.08,1417.41 L161.92,1417.41 L161.87,1419.95 L162.96,1420.40 L164.71,1418.57 L167.43,1421.29 L165.60,1423.04 L166.05,1424.13 Z" fill="#f0f0f0"/><circle cx="160" cy="1426" r="2.90" fill="#3b4252"/><path d="M9,1421.5 H25.5 L17.2,1430.8 Z" fill="#f0f0f0"/><path d="M168.59,1733.08 L168.59,1736.92 L166.05,1736.87 L165.60,1737.96 L167.43,1739.71 L164.71,1742.43 L162.96,1740.60 L161.87,1741.05 L161.92,1743.59 L158.08,1743.59 L158.13,1741.05 L157.04,1740.60 L155.29,1742.43 L152.57,1739.71 L154.40,1737.96 L153.95,1736.87 L151.41,1736.92 L151.41,1733.08 L153.95,1733.13 L154.40,1732.04 L152.57,1730.29 L155.29,1727.57 L157.04,1729.40 L158.13,1728.95 L158.08,1726.41 L161.92,1726.41 L161.87,1728.95 L162.96,1729.40 L164.71,1727.57 L167.43,1730.29 L165.60,1732.04 L166.05,1733.13 Z" fill="#f0f0f0"/><circle cx="160" cy="1735" r="2.90" fill="#3b4252"/><path d="M9,1730.5 H25.5 L17.2,1739.8 Z" fill="#f0f0f0"/><rect x="8" y="477" width="164" height="2.2" fill="#22272f"/><rect x="8" y="658" width="164" height="2.2" fill="#22272f"/><rect x="8" y="966" width="164" height="2.2" fill="#22272f"/><rect x="8" y="1402" width="164" height="2.2" fill="#22272f"/><rect x="8" y="1710" width="164" height="2.2" fill="#22272f"/><path d="M42,1767.5 V1789 M31,1778 H52.5" stroke="#f4f4f4" stroke-width="2"/><path d="M88,1768.5 H114 M88,1774 H114 M88,1787.5 H114 M88,1781 H103" stroke="#dcdcdc" stroke-width="2.4"/><path d="M106,1783 L110,1778 L114,1783 Z" fill="#dcdcdc"/><path d="M19.5,142 H45.5 V160.5 H19.5 Z" fill="none" stroke="#c4c4c4" stroke-width="1.8"/><rect x="17" y="157.5" width="5" height="5" fill="#3b4252" stroke="#c4c4c4" stroke-width="1.6"/><rect x="43" y="139" width="5" height="5" fill="#3b4252" stroke="#c4c4c4" stroke-width="1.6"/><path d="M86,142 H105 V161 H86 Z M86,142 L92,136 H111 L105,142 M111,136 V155 L105,161 M92,136 V155 H111 M92,155 L86,161" fill="none" stroke="#c0c0c0" stroke-width="1.7"/><path d="M151,146 L156,149.5 L151,153 M157,146 L162,149.5 L157,153" fill="none" stroke="#b9b9b9" stroke-width="1.4"/><rect x="10" y="90" width="14" height="14" fill="#8cc4f5"/><rect x="26" y="92" width="12" height="12" fill="#dedede"/><rect x="12" y="106" width="12" height="12" fill="#dedede"/><rect x="26" y="106" width="12" height="12" fill="#dedede"/><path d="M72,92.8 V115 M61,103.7 H83" stroke="#e0e0e0" stroke-width="2"/><path d="M324,1765 V1787 M313,1776 H335" stroke="#e0e0e0" stroke-width="2"/><path d="M2169,1761 V1791 M2177.6,1761 V1791 M2186.3,1761 V1791 M2163,1767.4 H2193 M2163,1776 H2193 M2163,1784.7 H2193" stroke="#e6e6e6" stroke-width="2.4"/><rect x="2209.5" y="1764" width="4" height="4" fill="#e6e6e6"/><rect x="2209.5" y="1774" width="4" height="4" fill="#e6e6e6"/><rect x="2209.5" y="1784" width="4" height="4" fill="#e6e6e6"/><rect x="2220" y="1764" width="4" height="4" fill="#e6e6e6"/><rect x="2220" y="1774" width="4" height="4" fill="#e6e6e6"/><rect x="2220" y="1784" width="4" height="4" fill="#e6e6e6"/><rect x="2230.3" y="1764" width="4" height="4" fill="#e6e6e6"/><rect x="2230.3" y="1774" width="4" height="4" fill="#e6e6e6"/><rect x="2230.3" y="1784" width="4" height="4" fill="#e6e6e6"/><rect x="2246" y="1756" width="40" height="40" fill="#6a8fc0"/><rect x="2422" y="1756" width="40" height="40" fill="#6a8fc0"/><rect x="2466" y="1756" width="40" height="40" fill="#6a8fc0"/><rect x="2554" y="1756" width="40" height="40" fill="#6a8fc0"/><rect x="2598" y="1756" width="40" height="40" fill="#6a8fc0"/><path d="M2251,1760 V1791 H2282 M2251,1781.5 H2261 V1791" fill="none" stroke="#fff" stroke-width="2"/><path d="M2320,1767 A11.5,11.5 0 1 0 2321,1781" fill="none" stroke="#e6e6e6" stroke-width="2"/><path d="M2301,1782 L2321,1763 M2301,1777 H2326" stroke="#e6e6e6" stroke-width="2"/><path d="M2344,1764 V1778 M2337,1771 H2351" stroke="#e6e6e6" stroke-width="2"/><rect x="2350.3" y="1780.4" width="20" height="7.4" fill="#e6e6e6"/><rect x="2352.5" y="1782.5" width="2.2" height="3.5" fill="#3b4354"/><rect x="2382" y="1763" width="32" height="3" fill="#e6e6e6"/><rect x="2382" y="1763" width="16" height="6" fill="#e6e6e6"/><rect x="2382" y="1771.5" width="32" height="3" fill="#e6e6e6"/><rect x="2382" y="1774" width="16" height="5" fill="#e6e6e6"/><rect x="2382" y="1781.5" width="32" height="3" fill="#e6e6e6"/><rect x="2382" y="1783" width="16" height="6" fill="#e6e6e6"/><rect x="2429" y="1763" width="26.5" height="26" fill="none" stroke="#fff" stroke-width="2.4"/><rect x="2431.0" y="1765.0" width="3.7" height="3.7" fill="#fff"/><rect x="2431.0" y="1772.4" width="3.7" height="3.7" fill="#fff"/><rect x="2431.0" y="1779.8" width="3.7" height="3.7" fill="#fff"/><rect x="2434.7" y="1768.7" width="3.7" height="3.7" fill="#fff"/><rect x="2434.7" y="1776.1" width="3.7" height="3.7" fill="#fff"/><rect x="2434.7" y="1783.5" width="3.7" height="3.7" fill="#fff"/><rect x="2438.4" y="1765.0" width="3.7" height="3.7" fill="#fff"/><rect x="2438.4" y="1772.4" width="3.7" height="3.7" fill="#fff"/><rect x="2438.4" y="1779.8" width="3.7" height="3.7" fill="#fff"/><rect x="2442.1" y="1768.7" width="3.7" height="3.7" fill="#fff"/><rect x="2442.1" y="1776.1" width="3.7" height="3.7" fill="#fff"/><rect x="2442.1" y="1783.5" width="3.7" height="3.7" fill="#fff"/><rect x="2445.8" y="1765.0" width="3.7" height="3.7" fill="#fff"/><rect x="2445.8" y="1772.4" width="3.7" height="3.7" fill="#fff"/><rect x="2445.8" y="1779.8" width="3.7" height="3.7" fill="#fff"/><rect x="2449.5" y="1768.7" width="3.7" height="3.7" fill="#fff"/><rect x="2449.5" y="1776.1" width="3.7" height="3.7" fill="#fff"/><rect x="2449.5" y="1783.5" width="3.7" height="3.7" fill="#fff"/><path d="M2477,1761 H2473.5 V1785.5 H2477 M2491,1761 H2494 V1785" fill="none" stroke="#fff" stroke-width="1.8"/><rect x="2479" y="1766" width="8" height="5" fill="#a9c4e6"/><circle cx="2483" cy="1779" r="4.5" fill="#a9c4e6" stroke="#fff" stroke-width="1.6"/><path d="M2491,1781 L2501,1788 L2496,1789 L2499,1795 L2497,1796 L2494,1790 L2491,1793 Z" fill="#fff"/><path d="M2514.5,1787 H2546 M2514.5,1787 L2538,1764" fill="none" stroke="#e6e6e6" stroke-width="2"/><rect x="2524" y="1773" width="5" height="5" fill="#e6e6e6"/><rect x="2559" y="1761" width="7.5" height="7.5" fill="none" stroke="#fff" stroke-width="1.8"/><path d="M2568,1765 H2589.5 V1791 H2562.5 V1770" fill="none" stroke="#fff" stroke-width="2"/><path d="M2616,1760 L2621.5,1774.5 A2.6,2.6 0 0 0 2622,1779.5 L2630,1792 L2620.5,1787.5 A3.6,3.6 0 0 0 2611.5,1787.5 L2602,1792 L2610,1779.5 A2.6,2.6 0 0 0 2610.5,1774.5 Z" fill="#fff"/><circle cx="2628" cy="1767.8" r="5.2" fill="none" stroke="#fff" stroke-width="2.2"/><path d="M2660,1760 L2665.5,1774.5 A2.6,2.6 0 0 0 2666,1779.5 L2674,1792 L2664.5,1787.5 A3.6,3.6 0 0 0 2655.5,1787.5 L2646,1792 L2654,1779.5 A2.6,2.6 0 0 0 2654.5,1774.5 Z" fill="#e6e6e6"/><path d="M2675.5,1760.3 L2667,1769.5 H2672 L2669,1775.6 L2677.6,1767 H2672.5 Z" fill="#e6e6e6"/><path d="M2706,1760 L2711.5,1774.5 A2.6,2.6 0 0 0 2712,1779.5 L2720,1792 L2710.5,1787.5 A3.6,3.6 0 0 0 2701.5,1787.5 L2692,1792 L2700,1779.5 A2.6,2.6 0 0 0 2700.5,1774.5 Z" fill="#e6e6e6"/><path d="M2760,1772 H2771.8 L2765.9,1779.8 Z" fill="#e6e6e6"/><rect x="2791" y="1761" width="13" height="13" fill="none" stroke="#e6e6e6" stroke-width="2"/><circle cx="2814.5" cy="1772.5" r="6" fill="none" stroke="#e6e6e6" stroke-width="2"/><path d="M2803,1779.5 L2810,1791.5 H2796 Z" fill="none" stroke="#e6e6e6" stroke-width="2"/><path d="M2864.64,1772.73 L2864.64,1779.27 L2860.32,1779.19 L2859.55,1781.04 L2862.67,1784.04 L2858.04,1788.67 L2855.04,1785.55 L2853.19,1786.32 L2853.27,1790.64 L2846.73,1790.64 L2846.81,1786.32 L2844.96,1785.55 L2841.96,1788.67 L2837.33,1784.04 L2840.45,1781.04 L2839.68,1779.19 L2835.36,1779.27 L2835.36,1772.73 L2839.68,1772.81 L2840.45,1770.96 L2837.33,1767.96 L2841.96,1763.33 L2844.96,1766.45 L2846.81,1765.68 L2846.73,1761.36 L2853.27,1761.36 L2853.19,1765.68 L2855.04,1766.45 L2858.04,1763.33 L2862.67,1767.96 L2859.55,1770.96 L2860.32,1772.81 Z" fill="#e0e0e0"/><circle cx="2850" cy="1776" r="4.95" fill="#3b4354"/><path d="M1024,1714.5 L1033,1718.5 L1024,1722.5" fill="none" stroke="#c9ccd2" stroke-width="1.8"/><path d="M1037,1735 H1050" stroke="#c9ccd2" stroke-width="2"/><path d="M1056,1719.5 H1067 L1061.5,1726.5 Z" fill="#c9ccd2"/><path d="M1921.7,1722.4 H1937 L1929.3,1731.2 Z" fill="#9aa0a8"/><path d="M1962,1725 H1968.5 M1978.5,1725 H1984 V1738 H1962 Z M1966,1725 V1738" fill="none" stroke="#d0d3d8" stroke-width="2"/><path d="M1973.5,1733 V1716" stroke="#8cc4f5" stroke-width="2"/><path d="M1969,1719.5 L1973.5,1713.5 L1978,1719.5 Z" fill="#8cc4f5"/><path d="M2854.5,145 L2849.5,149.7 L2854.5,154.4 M2861.5,145 L2856.5,149.7 L2861.5,154.4" fill="none" stroke="#b9bcc3" stroke-width="1.5"/></svg>
</body></html>
